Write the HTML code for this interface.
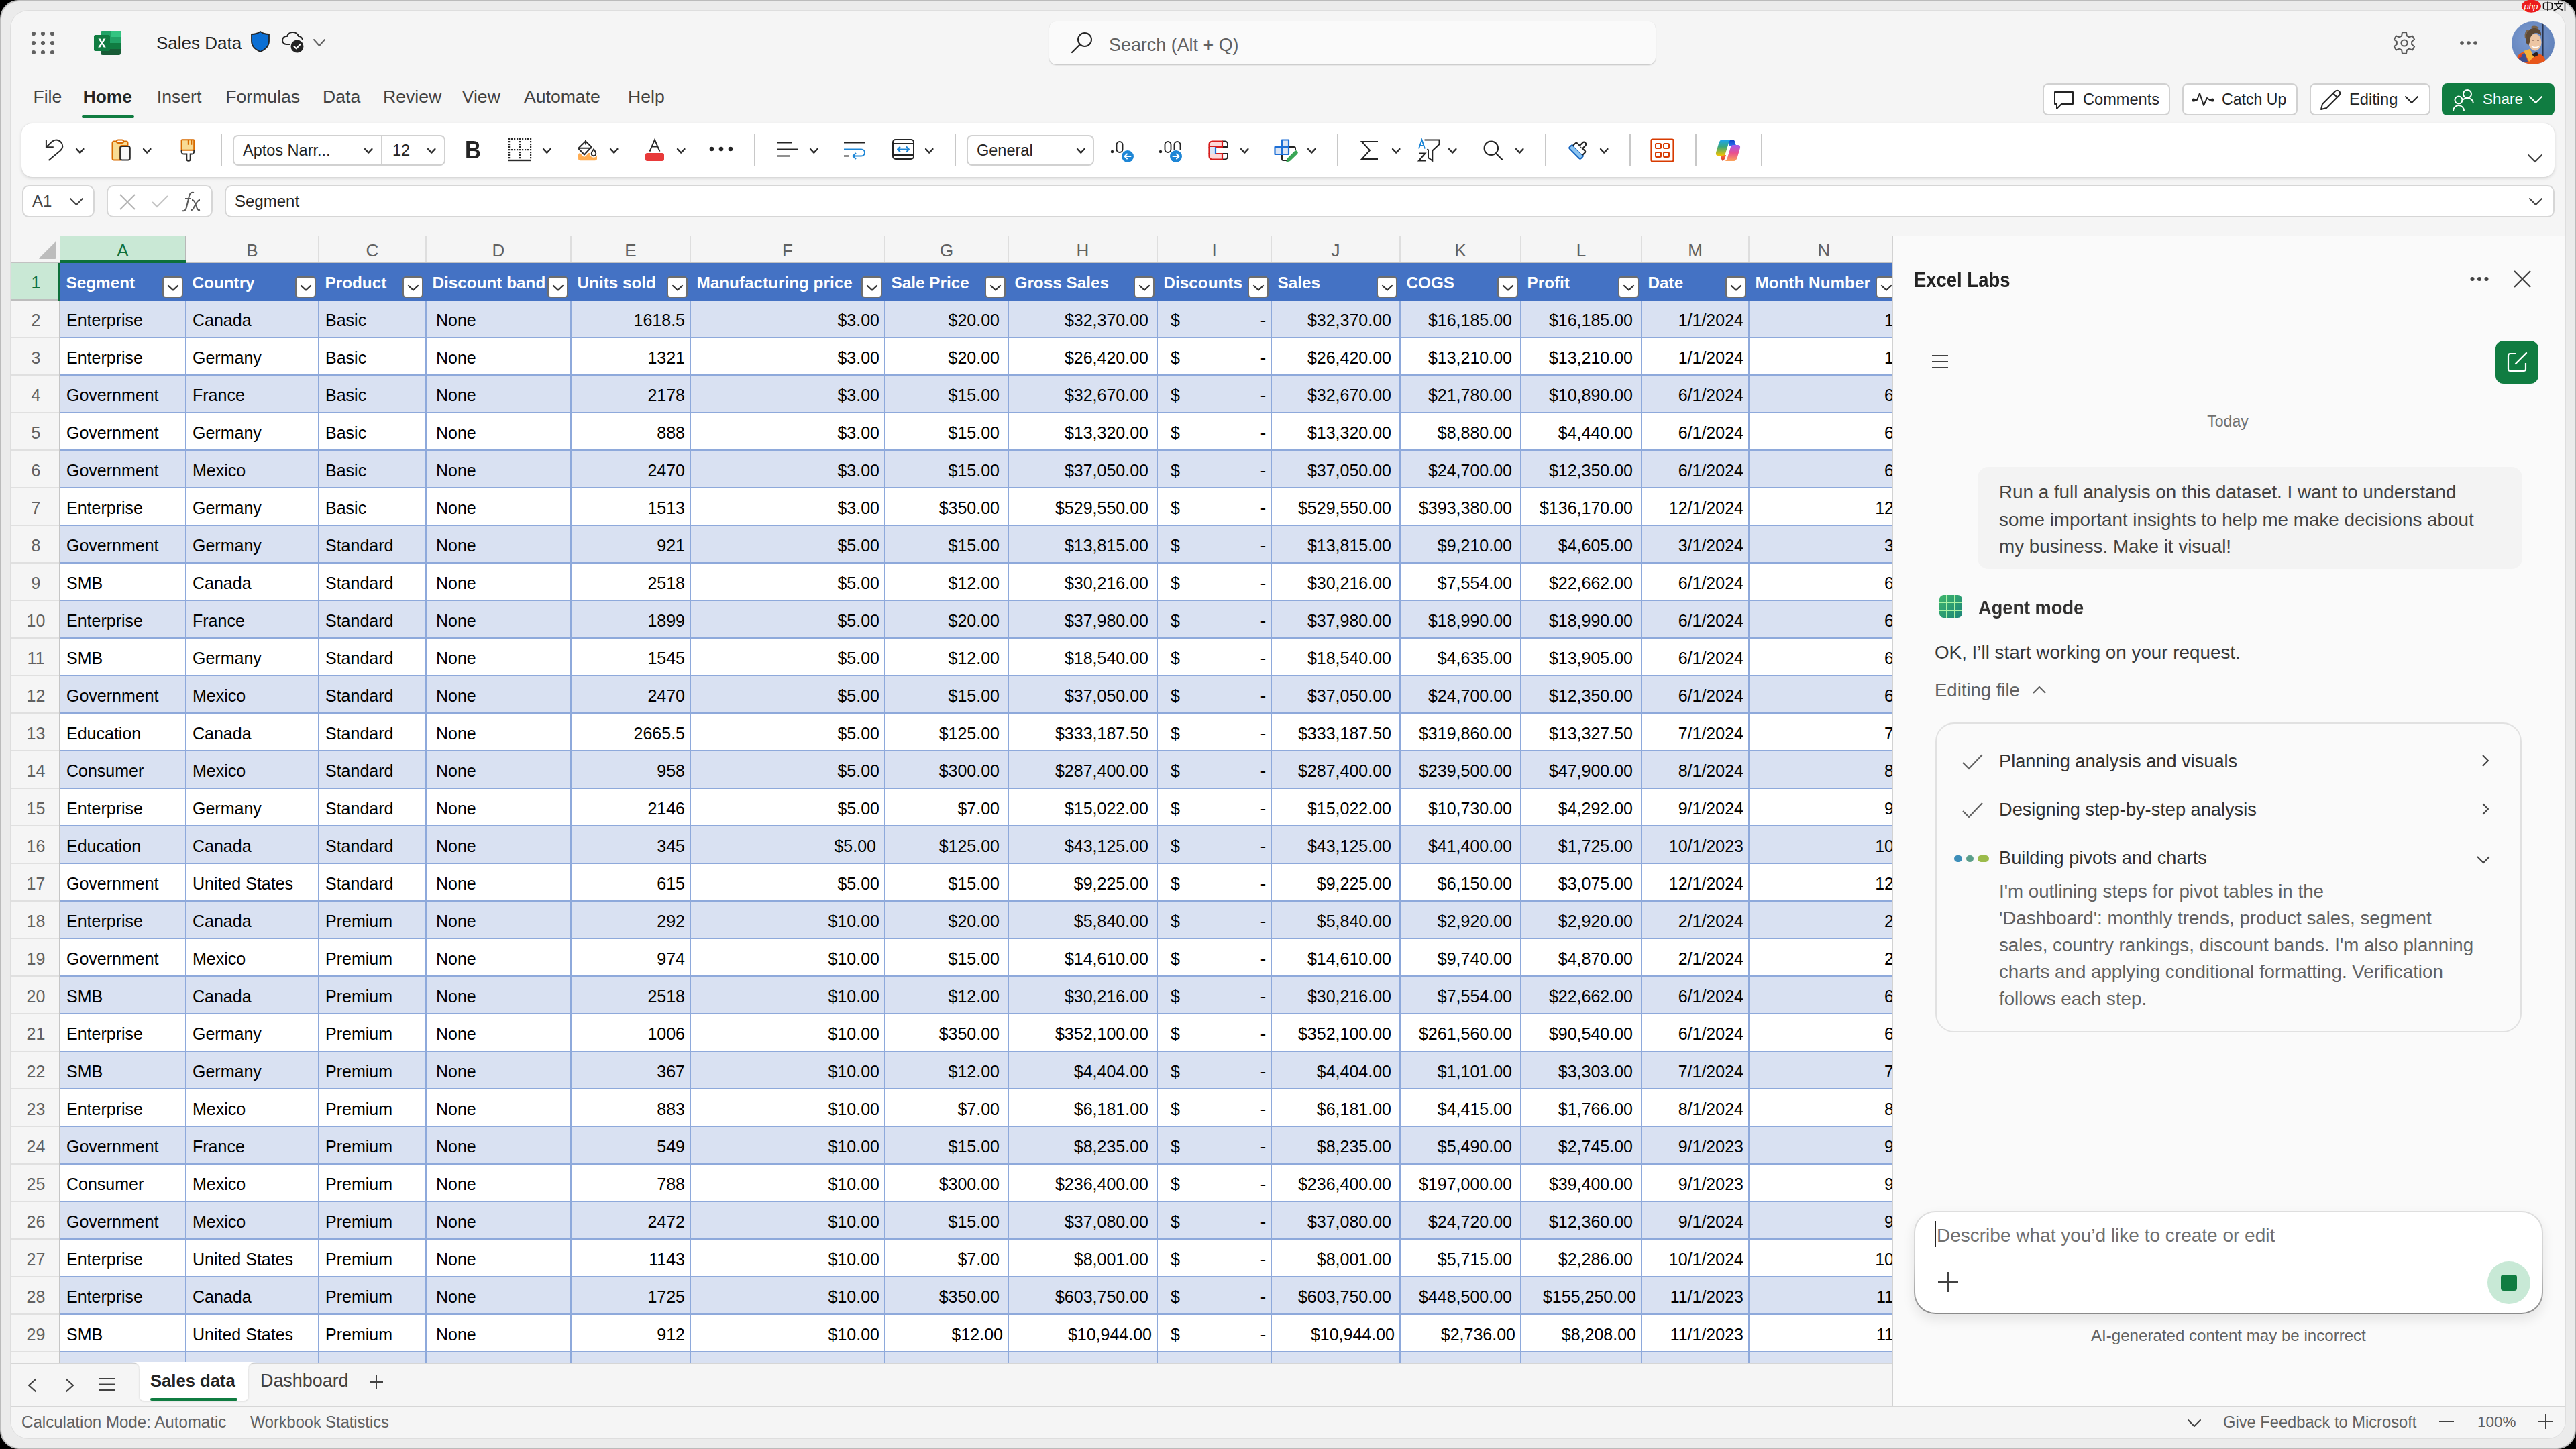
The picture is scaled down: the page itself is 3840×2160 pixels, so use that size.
<!DOCTYPE html><html><head><meta charset="utf-8"><style>
*{margin:0;padding:0;box-sizing:border-box}
html,body{width:3840px;height:2160px;overflow:hidden;background:#000}
body{font-family:"Liberation Sans",sans-serif;position:relative;color:#242424}
.a{position:absolute}
.t{position:absolute;white-space:nowrap}
svg{position:absolute;overflow:visible}
.frame{left:0;top:0;width:3840px;height:2160px;border-radius:28px;background:#ebebeb;border:2px solid #bbbbbb}
.win{left:16px;top:16px;width:3808px;height:2128px;border-radius:26px;background:#f5f5f5;overflow:hidden;box-shadow:0 0 0 1px #dedede}
.btn{position:absolute;border:2px solid #d1d1d1;border-radius:8px;background:#fff}
.sep{position:absolute;width:2px;background:#c8c8c8}
.chev{position:absolute}
.gl{position:absolute;width:2px;background:#8ea9db}
.cell{position:absolute;white-space:nowrap;font-size:25px;color:#000;line-height:56px;top:0}
.r{text-align:right}
.hdr{position:absolute;white-space:nowrap;font-size:24.3px;font-weight:bold;color:#fff;line-height:56px;top:0}
.fb{position:absolute;top:20px;width:31px;height:32px;border:2px solid #6e6e6e;border-radius:5px;background:#fff}
.ch{font-size:26px;color:#616161;line-height:36px;text-align:center}
.rh{font-size:25px;color:#616161;text-align:center;line-height:56px}
</style></head><body>
<div class="a frame"></div>
<div class="a win">
<svg style="left:0;top:0" width="120" height="120"><circle cx="34" cy="34" r="3.1" fill="#616161"/><circle cx="34" cy="48" r="3.1" fill="#616161"/><circle cx="34" cy="62" r="3.1" fill="#616161"/><circle cx="48" cy="34" r="3.1" fill="#616161"/><circle cx="48" cy="48" r="3.1" fill="#616161"/><circle cx="48" cy="62" r="3.1" fill="#616161"/><circle cx="62" cy="34" r="3.1" fill="#616161"/><circle cx="62" cy="48" r="3.1" fill="#616161"/><circle cx="62" cy="62" r="3.1" fill="#616161"/></svg>
<svg style="left:124px;top:30px" width="40" height="36" viewBox="0 0 40 36">
<path d="M12 0 H37 a3 3 0 0 1 3 3 V9 H10 V2 a2 2 0 0 1 2-2z" fill="#21a366"/>
<rect x="25" y="0" width="15" height="9" fill="#33c481"/>
<path d="M37 0 a3 3 0 0 1 3 3 V9 H25 V0z" fill="#33c481"/>
<rect x="10" y="9" width="30" height="9" fill="#21a366"/>
<rect x="10" y="18" width="30" height="9" fill="#107c41"/>
<path d="M10 27 H40 V33 a3 3 0 0 1-3 3 H13 a3 3 0 0 1-3-3z" fill="#185c37"/>
<rect x="0" y="6" width="24" height="24" rx="2.5" fill="#107c41"/>
<path d="M6.5 11.5 L10.4 18 L6.2 24.5 H9.4 L12 20.1 L14.6 24.5 H17.8 L13.6 18 L17.5 11.5 H14.4 L12 15.9 L9.6 11.5z" fill="#fff"/>
</svg>
<div class="t" style="left:217px;top:30px;font-size:26px;line-height:36px;color:#242424">Sales Data</div>
<svg style="left:358px;top:30px" width="28" height="32" viewBox="0 0 28 32">
<path d="M14 1 C18 4 22 5 27 5 V15 C27 23 21 28 14 31 C7 28 1 23 1 15 V5 C6 5 10 4 14 1z" fill="#0b6fd4" stroke="#242424" stroke-width="1.8" stroke-linejoin="round"/></svg>
<svg style="left:403px;top:29px" width="36" height="34" viewBox="0 0 36 34">
<path d="M13 21 H8 a6 6 0 0 1 0-12 h1 a9 9 0 0 1 17 0 a6 6 0 0 1 6 6" fill="none" stroke="#242424" stroke-width="2"/>
<circle cx="24" cy="24" r="9.5" fill="#242424"/>
<path d="M19.5 24.3 L22.7 27.3 L28.5 21" fill="none" stroke="#fff" stroke-width="2.2" stroke-linecap="round" stroke-linejoin="round"/></svg>
<svg class="chev" style="left:450.0px;top:41.0px" width="20" height="13"><path d="M2 2 L10.0 11 L18 2" fill="none" stroke="#616161" stroke-width="2" stroke-linecap="round" stroke-linejoin="round"/></svg>
<div class="a" style="left:1548px;top:16px;width:904px;height:64px;border-radius:10px;background:#fafafa;box-shadow:0 1px 2px rgba(0,0,0,0.22)"></div>
<svg style="left:1580px;top:31px" width="34" height="34" viewBox="0 0 34 34">
<circle cx="21" cy="12" r="10" fill="none" stroke="#242424" stroke-width="2"/>
<path d="M14 19 L2 31" stroke="#242424" stroke-width="2.2" stroke-linecap="round"/></svg>
<div class="t" style="left:1637px;top:33px;font-size:26.9px;line-height:36px;color:#616161">Search (Alt + Q)</div>
<svg style="left:3551px;top:31px" width="34" height="34" viewBox="0 0 34 34">
<path d="M13.14 6.38 L13.95 1.29 L20.05 1.29 L20.86 6.38 L24.26 8.34 L29.08 6.50 L32.13 11.79 L28.13 15.04 L28.13 18.96 L32.13 22.21 L29.08 27.50 L24.26 25.66 L20.86 27.62 L20.05 32.71 L13.95 32.71 L13.14 27.62 L9.74 25.66 L4.92 27.50 L1.87 22.21 L5.87 18.96 L5.87 15.04 L1.87 11.79 L4.92 6.50 L9.74 8.34z" fill="none" stroke="#595959" stroke-width="2" stroke-linejoin="round"/>
<circle cx="17" cy="17" r="4.6" fill="none" stroke="#595959" stroke-width="2"/></svg>
<svg style="left:3650px;top:44px" width="28" height="8"><circle cx="4" cy="4" r="2.8" fill="#595959"/><circle cx="14" cy="4" r="2.8" fill="#595959"/><circle cx="24" cy="4" r="2.8" fill="#595959"/></svg>
<svg style="left:3728px;top:16px" width="64" height="64" viewBox="0 0 64 64">
<defs><clipPath id="av"><circle cx="32" cy="32" r="32"/></clipPath>
<radialGradient id="avbg" cx="0.4" cy="0.4" r="0.7"><stop offset="0" stop-color="#7b9ad0"/><stop offset="1" stop-color="#5e7fb8"/></radialGradient></defs>
<g clip-path="url(#av)">
<rect width="64" height="64" fill="url(#avbg)"/>
<rect x="46" y="0" width="1.6" height="56" fill="#2a3550"/>
<path d="M4 64 L10 50 C14 46 18 45 22 45 L30 52 L40 48 C46 49 50 53 52 64z" fill="#e8561a"/>
<path d="M8 64 L12 52 L20 46 L24 60z" fill="#3f4f8f"/>
<path d="M9 56 L14 49 L16 52z" fill="#d83a2a"/>
<path d="M18 44 L27 41 L34 52 L26 60z" fill="#f6b13a"/>
<path d="M30 49 L38 45 L40 50 L34 53z" fill="#2b2020"/>
<ellipse cx="35" cy="31" rx="9.5" ry="12.5" fill="#edc6a4"/>
<path d="M22 32 C19 22 22 12 32 10 C40 9 45 14 44 21 C41 17 36 16 33 18 C29 20 27 25 27 31 L25 36z" fill="#5e4a36"/>
<path d="M21 24 C20 18 22 14 25 13 M30 9 C33 7 37 8 40 10" fill="none" stroke="#7a6248" stroke-width="2.5"/>
<path d="M30 37 Q35 41 41 37 Q35 39.5 30 37z" fill="#fff" stroke="#fff" stroke-width="1.2"/>
<path d="M30 28 h3 M38 28 h3" stroke="#6b4a3a" stroke-width="1.2"/>
</g></svg>
<div class="t" style="left:33.4px;top:110px;font-size:26.6px;line-height:36px;color:#424242;">File</div>
<div class="t" style="left:107.7px;top:110px;font-size:26.6px;line-height:36px;color:#242424;font-weight:bold;font-size:26.4px">Home</div>
<div class="t" style="left:217.8px;top:110px;font-size:26.6px;line-height:36px;color:#424242;">Insert</div>
<div class="t" style="left:320.3px;top:110px;font-size:26.6px;line-height:36px;color:#424242;">Formulas</div>
<div class="t" style="left:465px;top:110px;font-size:26.6px;line-height:36px;color:#424242;">Data</div>
<div class="t" style="left:555px;top:110px;font-size:26.6px;line-height:36px;color:#424242;">Review</div>
<div class="t" style="left:672.7px;top:110px;font-size:26.6px;line-height:36px;color:#424242;">View</div>
<div class="t" style="left:765px;top:110px;font-size:26.6px;line-height:36px;color:#424242;">Automate</div>
<div class="t" style="left:920px;top:110px;font-size:26.6px;line-height:36px;color:#424242;">Help</div>
<div class="a" style="left:106px;top:156px;width:78px;height:4px;border-radius:2px;background:#107c41"></div>
<div class="btn" style="left:3029px;top:108px;width:190px;height:48px"></div>
<div class="btn" style="left:3237px;top:108px;width:172px;height:48px"></div>
<div class="btn" style="left:3427px;top:108px;width:180px;height:48px"></div>
<div class="a" style="left:3624px;top:108px;width:168px;height:48px;border-radius:8px;background:#107c41"></div>
<svg style="left:3045px;top:119px" width="32" height="30" viewBox="0 0 32 30">
<path d="M2 2 H29 V20 H12 L5 27 V20 H2z" fill="none" stroke="#242424" stroke-width="2" stroke-linejoin="round"/></svg>
<div class="t" style="left:3089px;top:114px;font-size:23.6px;line-height:36px">Comments</div>
<svg style="left:3251px;top:120px" width="34" height="24" viewBox="0 0 34 24">
<circle cx="3" cy="13" r="2.6" fill="#242424"/><circle cx="31" cy="13" r="2.6" fill="#242424"/>
<path d="M3 13 H8 L12 3 L18 21 L23 10 L27 13 H31" fill="none" stroke="#242424" stroke-width="2" stroke-linejoin="round"/></svg>
<div class="t" style="left:3296px;top:114px;font-size:23.1px;line-height:36px">Catch Up</div>
<svg style="left:3441px;top:115px" width="34" height="34" viewBox="0 0 34 34">
<path d="M5 24 L24 5 a4 4 0 0 1 6 6 L11 30 L3 32z M21 8 L27 14" fill="none" stroke="#242424" stroke-width="2" stroke-linejoin="round"/></svg>
<div class="t" style="left:3486px;top:114px;font-size:23.7px;line-height:36px">Editing</div>
<svg class="chev" style="left:3567.5px;top:125.5px" width="22" height="13"><path d="M2 2 L11.0 11 L20 2" fill="none" stroke="#242424" stroke-width="2" stroke-linecap="round" stroke-linejoin="round"/></svg>
<svg style="left:3640px;top:116px" width="34" height="34" viewBox="0 0 34 34">
<circle cx="22" cy="8" r="6" fill="none" stroke="#fff" stroke-width="2"/>
<path d="M13 22 a9 8 0 0 1 18 0" fill="none" stroke="#fff" stroke-width="2"/>
<circle cx="9" cy="17" r="5.5" fill="none" stroke="#fff" stroke-width="2"/>
<path d="M1 33 a8 8 0 0 1 16 0" fill="none" stroke="#fff" stroke-width="2"/></svg>
<div class="t" style="left:3685px;top:114px;font-size:22.5px;line-height:36px;color:#fff">Share</div>
<svg class="chev" style="left:3753.0px;top:125.5px" width="22" height="13"><path d="M2 2 L11.0 11 L20 2" fill="none" stroke="#fff" stroke-width="2" stroke-linecap="round" stroke-linejoin="round"/></svg>
<div class="a" style="left:16px;top:168px;width:3776px;height:80px;border-radius:16px;background:#fff;box-shadow:0 2px 5px rgba(0,0,0,0.13),0 0 2px rgba(0,0,0,0.1)"></div>
<div class="sep" style="left:313px;top:184px;height:48px"></div>
<div class="sep" style="left:1108px;top:184px;height:48px"></div>
<div class="sep" style="left:1407px;top:184px;height:48px"></div>
<div class="sep" style="left:1977px;top:184px;height:48px"></div>
<div class="sep" style="left:2287px;top:184px;height:48px"></div>
<div class="sep" style="left:2413px;top:184px;height:48px"></div>
<div class="sep" style="left:2511px;top:184px;height:48px"></div>
<div class="sep" style="left:2609px;top:184px;height:48px"></div>
<svg style="left:50px;top:191px" width="32" height="34" viewBox="0 0 32 34">
<path d="M2.9 1 V12.2 H13.8" fill="none" stroke="#2b2b2b" stroke-width="2"/>
<path d="M3.5 11.5 L11.5 4 C13.5 2.2 15.8 1.5 17.8 1.5 C23 1.5 27.3 6 27.3 11 C27.3 13.5 26 15.6 23.6 17.7 L6.5 31.9" fill="none" stroke="#2b2b2b" stroke-width="2"/></svg>
<svg class="chev" style="left:95.75px;top:204.2px" width="14.5" height="9.6"><path d="M2 2 L7.25 7.6 L12.5 2" fill="none" stroke="#2b2b2b" stroke-width="2.3" stroke-linecap="round" stroke-linejoin="round"/></svg>
<svg style="left:149px;top:191px" width="32" height="34" viewBox="0 0 32 34">
<path d="M5 3.5 H23 a2.5 2.5 0 0 1 2.5 2.5 V10 H17 a3 3 0 0 0-3 3 V31.5 H5 a2.5 2.5 0 0 1-2.5-2.5 V6 A2.5 2.5 0 0 1 5 3.5z" fill="#f8db94" stroke="#d86b00" stroke-width="2"/>
<rect x="9" y="1.5" width="10" height="4.5" rx="2.2" fill="#fff" stroke="#d86b00" stroke-width="2"/>
<rect x="14.3" y="11" width="14.5" height="20.5" rx="2.8" fill="#f8f8f8" stroke="#2b2b2b" stroke-width="2"/></svg>
<svg class="chev" style="left:196.25px;top:204.2px" width="14.5" height="9.6"><path d="M2 2 L7.25 7.6 L12.5 2" fill="none" stroke="#2b2b2b" stroke-width="2.3" stroke-linecap="round" stroke-linejoin="round"/></svg>
<svg style="left:253px;top:191px" width="22" height="34" viewBox="0 0 22 34">
<rect x="1.6" y="1.3" width="18.6" height="15.4" rx="1" fill="#f8db94" stroke="#d86b00" stroke-width="2"/>
<path d="M11.8 1.5 V8.8 M16.3 1.5 V8.8" stroke="#d86b00" stroke-width="2"/>
<path d="M1.6 17 V19 a3.6 3.6 0 0 0 3.6 3.6 H9.3 V30 a2.7 2.7 0 0 0 5.4 0 V22.6 H16.6 a3.6 3.6 0 0 0 3.6-3.6 V17" fill="none" stroke="#2b2b2b" stroke-width="2"/></svg>
<div class="a" style="left:331px;top:185px;width:317px;height:46px;border:2px solid #d1d1d1;border-radius:8px;background:#fff"></div>
<div class="a" style="left:552px;top:186px;width:2px;height:44px;background:#d1d1d1"></div>
<div class="t" style="left:346px;top:190px;font-size:23.5px;line-height:36px;color:#242424">Aptos Narr...</div>
<svg class="chev" style="left:526.25px;top:204.2px" width="14.5" height="9.6"><path d="M2 2 L7.25 7.6 L12.5 2" fill="none" stroke="#2b2b2b" stroke-width="2.3" stroke-linecap="round" stroke-linejoin="round"/></svg>
<div class="t" style="left:569px;top:190px;font-size:23.5px;line-height:36px;color:#242424">12</div>
<svg class="chev" style="left:619.75px;top:204.2px" width="14.5" height="9.6"><path d="M2 2 L7.25 7.6 L12.5 2" fill="none" stroke="#2b2b2b" stroke-width="2.3" stroke-linecap="round" stroke-linejoin="round"/></svg>
<div class="t" style="left:677px;top:189px;font-size:36px;line-height:38px;font-weight:bold;color:#242424;transform:scaleX(0.92);transform-origin:left">B</div>
<svg style="left:741px;top:189px" width="38" height="38" viewBox="0 0 38 38"><rect x="1" y="1" width="2.2" height="2.2" fill="#2b2b2b"/><rect x="1" y="17" width="2.2" height="2.2" fill="#2b2b2b"/><rect x="5" y="1" width="2.2" height="2.2" fill="#2b2b2b"/><rect x="5" y="17" width="2.2" height="2.2" fill="#2b2b2b"/><rect x="9" y="1" width="2.2" height="2.2" fill="#2b2b2b"/><rect x="9" y="17" width="2.2" height="2.2" fill="#2b2b2b"/><rect x="13" y="1" width="2.2" height="2.2" fill="#2b2b2b"/><rect x="13" y="17" width="2.2" height="2.2" fill="#2b2b2b"/><rect x="17" y="1" width="2.2" height="2.2" fill="#2b2b2b"/><rect x="17" y="17" width="2.2" height="2.2" fill="#2b2b2b"/><rect x="21" y="1" width="2.2" height="2.2" fill="#2b2b2b"/><rect x="21" y="17" width="2.2" height="2.2" fill="#2b2b2b"/><rect x="25" y="1" width="2.2" height="2.2" fill="#2b2b2b"/><rect x="25" y="17" width="2.2" height="2.2" fill="#2b2b2b"/><rect x="29" y="1" width="2.2" height="2.2" fill="#2b2b2b"/><rect x="29" y="17" width="2.2" height="2.2" fill="#2b2b2b"/><rect x="33" y="1" width="2.2" height="2.2" fill="#2b2b2b"/><rect x="33" y="17" width="2.2" height="2.2" fill="#2b2b2b"/><rect x="1" y="5" width="2.2" height="2.2" fill="#2b2b2b"/><rect x="17" y="5" width="2.2" height="2.2" fill="#2b2b2b"/><rect x="33" y="5" width="2.2" height="2.2" fill="#2b2b2b"/><rect x="1" y="9" width="2.2" height="2.2" fill="#2b2b2b"/><rect x="17" y="9" width="2.2" height="2.2" fill="#2b2b2b"/><rect x="33" y="9" width="2.2" height="2.2" fill="#2b2b2b"/><rect x="1" y="13" width="2.2" height="2.2" fill="#2b2b2b"/><rect x="17" y="13" width="2.2" height="2.2" fill="#2b2b2b"/><rect x="33" y="13" width="2.2" height="2.2" fill="#2b2b2b"/><rect x="1" y="21" width="2.2" height="2.2" fill="#2b2b2b"/><rect x="17" y="21" width="2.2" height="2.2" fill="#2b2b2b"/><rect x="33" y="21" width="2.2" height="2.2" fill="#2b2b2b"/><rect x="1" y="25" width="2.2" height="2.2" fill="#2b2b2b"/><rect x="17" y="25" width="2.2" height="2.2" fill="#2b2b2b"/><rect x="33" y="25" width="2.2" height="2.2" fill="#2b2b2b"/><rect x="1" y="29" width="2.2" height="2.2" fill="#2b2b2b"/><rect x="17" y="29" width="2.2" height="2.2" fill="#2b2b2b"/><rect x="33" y="29" width="2.2" height="2.2" fill="#2b2b2b"/>
<rect x="1" y="32.8" width="34" height="2.4" fill="#2b2b2b"/></svg>
<svg class="chev" style="left:791.75px;top:204.2px" width="14.5" height="9.6"><path d="M2 2 L7.25 7.6 L12.5 2" fill="none" stroke="#2b2b2b" stroke-width="2.3" stroke-linecap="round" stroke-linejoin="round"/></svg>
<svg style="left:844px;top:190px" width="32" height="36" viewBox="0 0 32 36">
<rect x="2" y="22" width="28" height="11.3" rx="3.3" fill="#ffad52"/>
<path d="M2 15 L13 4.5 L21.7 13 L11 24.5z" fill="#fff" stroke="#fff" stroke-width="6" stroke-linejoin="round"/>
<path d="M25 16.4 C23 19 21.7 21 21.7 23 a3.3 3.3 0 0 0 6.6 0 C28.3 21 27 19 25 16.4z" fill="#fff" stroke="#fff" stroke-width="5"/>
<path d="M2 15 L13 4.5 L21.7 13 L11 24.5z M2.5 14.7 H21.5" fill="none" stroke="#2b2b2b" stroke-width="2" stroke-linejoin="round"/>
<path d="M13 2 V9.5" stroke="#2b2b2b" stroke-width="2"/>
<path d="M25 16.4 C23 19 21.7 21 21.7 23 a3.3 3.3 0 0 0 6.6 0 C28.3 21 27 19 25 16.4z" fill="none" stroke="#2b2b2b" stroke-width="1.9"/></svg>
<svg class="chev" style="left:892.25px;top:204.2px" width="14.5" height="9.6"><path d="M2 2 L7.25 7.6 L12.5 2" fill="none" stroke="#2b2b2b" stroke-width="2.3" stroke-linecap="round" stroke-linejoin="round"/></svg>
<svg style="left:945px;top:190px" width="30" height="36" viewBox="0 0 30 36">
<path d="M7.5 19.6 L15 2.2 L22.5 19.6 M10.5 12.6 H19.5" fill="none" stroke="#2b2b2b" stroke-width="2"/>
<rect x="1" y="22" width="28" height="12" rx="3" fill="#e83a3a"/></svg>
<svg class="chev" style="left:992.25px;top:204.2px" width="14.5" height="9.6"><path d="M2 2 L7.25 7.6 L12.5 2" fill="none" stroke="#2b2b2b" stroke-width="2.3" stroke-linecap="round" stroke-linejoin="round"/></svg>
<svg style="left:1041px;top:202px" width="36" height="8"><circle cx="4" cy="4" r="3.3" fill="#242424"/><circle cx="18" cy="4" r="3.3" fill="#242424"/><circle cx="32" cy="4" r="3.3" fill="#242424"/></svg>
<svg style="left:1142px;top:192px" width="34" height="28" viewBox="0 0 34 28">
<path d="M0 4.5 H23 M0 14.5 H32 M0 24.5 H20" stroke="#242424" stroke-width="2"/></svg>
<svg class="chev" style="left:1189.75px;top:204.2px" width="14.5" height="9.6"><path d="M2 2 L7.25 7.6 L12.5 2" fill="none" stroke="#2b2b2b" stroke-width="2.3" stroke-linecap="round" stroke-linejoin="round"/></svg>
<svg style="left:1242px;top:192px" width="34" height="32" viewBox="0 0 34 32">
<path d="M0 4.5 H32" stroke="#242424" stroke-width="2"/>
<path d="M0 24.5 H8" stroke="#242424" stroke-width="2"/>
<path d="M0 14.5 H26 a5 5 0 0 1 0 10 H14 M18 20 L13.5 24.5 L18 29" fill="none" stroke="#1d86d6" stroke-width="2" stroke-linejoin="round"/></svg>
<svg style="left:1314px;top:191px" width="34" height="32" viewBox="0 0 34 32">
<rect x="1" y="1" width="31" height="29" rx="4" fill="none" stroke="#242424" stroke-width="2"/>
<path d="M1 7 H32 M1 24 H32" stroke="#242424" stroke-width="2"/>
<path d="M8 15.5 H25 M12 11.5 L8 15.5 L12 19.5 M21 11.5 L25 15.5 L21 19.5" fill="none" stroke="#1d86d6" stroke-width="2" stroke-linejoin="round"/></svg>
<svg class="chev" style="left:1362.25px;top:204.2px" width="14.5" height="9.6"><path d="M2 2 L7.25 7.6 L12.5 2" fill="none" stroke="#2b2b2b" stroke-width="2.3" stroke-linecap="round" stroke-linejoin="round"/></svg>
<div class="a" style="left:1425px;top:185px;width:190px;height:46px;border:2px solid #d1d1d1;border-radius:8px;background:#fff"></div>
<div class="t" style="left:1440px;top:190px;font-size:23.5px;line-height:36px;color:#242424">General</div>
<svg class="chev" style="left:1587.75px;top:204.2px" width="14.5" height="9.6"><path d="M2 2 L7.25 7.6 L12.5 2" fill="none" stroke="#2b2b2b" stroke-width="2.3" stroke-linecap="round" stroke-linejoin="round"/></svg>
<svg style="left:1638px;top:192px" width="40" height="36" viewBox="0 0 40 36">
<circle cx="4" cy="18" r="2.2" fill="#242424"/>
<rect x="10.5" y="3" width="9" height="16" rx="4.5" fill="none" stroke="#242424" stroke-width="1.9"/>
<circle cx="27" cy="25" r="9" fill="#1d86d6"/>
<path d="M31.5 25 H22.5 M26 21.5 L22.5 25 L26 28.5" fill="none" stroke="#fff" stroke-width="2" stroke-linecap="round" stroke-linejoin="round"/></svg>
<svg style="left:1710px;top:192px" width="40" height="36" viewBox="0 0 40 36">
<circle cx="4" cy="18" r="2.2" fill="#242424"/>
<rect x="10.5" y="3" width="9" height="16" rx="4.5" fill="none" stroke="#242424" stroke-width="1.9"/>
<path d="M24.5 15 V7.5 a4.5 4.5 0 0 1 9 0 V15" fill="none" stroke="#242424" stroke-width="1.9"/>
<circle cx="27" cy="25" r="9" fill="#1d86d6"/>
<path d="M22.5 25 H31.5 M28 21.5 L31.5 25 L28 28.5" fill="none" stroke="#fff" stroke-width="2" stroke-linecap="round" stroke-linejoin="round"/></svg>
<svg style="left:1785px;top:193px" width="32" height="30" viewBox="0 0 32 30">
<path d="M21 1.5 H25 a4 4 0 0 1 4 4 V10 H21" fill="none" stroke="#242424" stroke-width="2"/>
<path d="M21 28.5 H25 a4 4 0 0 0 4-4 V20 H21" fill="none" stroke="#242424" stroke-width="2"/>
<path d="M21 1.5 H6 a4.5 4.5 0 0 0-4.5 4.5 V10 H21z" fill="#fdd8d8" stroke="#d61b1b" stroke-width="2.2" stroke-linejoin="round"/>
<path d="M21 28.5 H6 a4.5 4.5 0 0 1-4.5-4.5 V20 H21z" fill="#fdd8d8" stroke="#d61b1b" stroke-width="2.2" stroke-linejoin="round"/>
<rect x="1.5" y="10" width="9.5" height="10" fill="#dbe5f5"/>
<path d="M1.5 10 V20" stroke="#d61b1b" stroke-width="2.2"/>
<path d="M11 10 V20" stroke="#1d6fd6" stroke-width="2.2"/></svg>
<svg class="chev" style="left:1832.25px;top:204.2px" width="14.5" height="9.6"><path d="M2 2 L7.25 7.6 L12.5 2" fill="none" stroke="#2b2b2b" stroke-width="2.3" stroke-linecap="round" stroke-linejoin="round"/></svg>
<svg style="left:1883px;top:191px" width="36" height="36" viewBox="0 0 36 36">
<path d="M22 12 H30 a2 2 0 0 1 2 2 V17" fill="none" stroke="#242424" stroke-width="2"/>
<path d="M12 23 V30 a2 2 0 0 0 2 2 H19" fill="none" stroke="#242424" stroke-width="2"/>
<path d="M12 1.5 H22 V23 H1.5 V12 H12z" fill="#dbe5f5" stroke="#1d6fd6" stroke-width="2.2" stroke-linejoin="round"/>
<path d="M12 12 H22 M12 12 V23" stroke="#1d6fd6" stroke-width="2.2"/>
<path d="M18 35 L20 29 L31 18 a3 3 0 0 1 4.2 4.2 L24 33z" fill="#3aa655"/></svg>
<svg class="chev" style="left:1932.25px;top:204.2px" width="14.5" height="9.6"><path d="M2 2 L7.25 7.6 L12.5 2" fill="none" stroke="#2b2b2b" stroke-width="2.3" stroke-linecap="round" stroke-linejoin="round"/></svg>
<svg style="left:2012px;top:193px" width="28" height="30" viewBox="0 0 28 30">
<path d="M26 2 H2 L14 15 L2 28 H26" fill="none" stroke="#242424" stroke-width="2" stroke-linejoin="miter"/></svg>
<svg class="chev" style="left:2057.75px;top:204.2px" width="14.5" height="9.6"><path d="M2 2 L7.25 7.6 L12.5 2" fill="none" stroke="#2b2b2b" stroke-width="2.3" stroke-linecap="round" stroke-linejoin="round"/></svg>
<svg style="left:2096px;top:190px" width="36" height="36" viewBox="0 0 36 36">
<path d="M3 15.5 L7.5 2.5 L12 15.5 M4.6 11 H10.4" fill="none" stroke="#1d86d6" stroke-width="1.9"/>
<path d="M3 22.5 H12.5 L3 33.5 H13" fill="none" stroke="#242424" stroke-width="2" stroke-linejoin="miter"/>
<path d="M11.5 2.5 H33.5 V9 L23.3 18.5 V33.5 L17 29 V17.5 L15.5 16" fill="none" stroke="#242424" stroke-width="2" stroke-linejoin="miter"/></svg>
<svg class="chev" style="left:2142.25px;top:204.2px" width="14.5" height="9.6"><path d="M2 2 L7.25 7.6 L12.5 2" fill="none" stroke="#2b2b2b" stroke-width="2.3" stroke-linecap="round" stroke-linejoin="round"/></svg>
<svg style="left:2194px;top:192px" width="32" height="32" viewBox="0 0 32 32">
<circle cx="12.8" cy="12.8" r="10.3" fill="none" stroke="#242424" stroke-width="2"/>
<path d="M20 20.5 L29 29.5" stroke="#242424" stroke-width="2.2" stroke-linecap="round"/></svg>
<svg class="chev" style="left:2242.25px;top:204.2px" width="14.5" height="9.6"><path d="M2 2 L7.25 7.6 L12.5 2" fill="none" stroke="#2b2b2b" stroke-width="2.3" stroke-linecap="round" stroke-linejoin="round"/></svg>
<svg style="left:2319px;top:191px" width="34" height="34" viewBox="0 0 34 34">
<g transform="rotate(45 17 17)">
<rect x="5" y="17" width="24" height="7" rx="2" fill="#8cc4f0" stroke="#1565c0" stroke-width="2"/>
<path d="M7 17 V12 a2 2 0 0 1 2-2 H25 a2 2 0 0 1 2 2 V17" fill="#fff" stroke="#242424" stroke-width="2"/>
<path d="M14 10 V4 a3 3 0 0 1 6 0 V10" fill="#fff" stroke="#242424" stroke-width="2"/>
</g></svg>
<svg class="chev" style="left:2368.25px;top:204.2px" width="14.5" height="9.6"><path d="M2 2 L7.25 7.6 L12.5 2" fill="none" stroke="#2b2b2b" stroke-width="2.3" stroke-linecap="round" stroke-linejoin="round"/></svg>
<svg style="left:2444px;top:190px" width="36" height="36" viewBox="0 0 36 36">
<rect x="1.5" y="1.5" width="33" height="33" rx="2" fill="none" stroke="#d83b01" stroke-width="2.2"/>
<rect x="8" y="8" width="8" height="7" rx="1.5" fill="none" stroke="#d83b01" stroke-width="2"/>
<rect x="20" y="8" width="8" height="7" rx="1.5" fill="none" stroke="#d83b01" stroke-width="2"/>
<rect x="8" y="21" width="8" height="7" rx="1.5" fill="none" stroke="#d83b01" stroke-width="2"/>
<rect x="20" y="21" width="8" height="7" rx="1.5" fill="none" stroke="#d83b01" stroke-width="2"/></svg>
<svg style="left:2541px;top:191px" width="38" height="34" viewBox="0 0 38 34">
<defs>
<linearGradient id="cpa" x1="0" y1="0" x2="0" y2="1"><stop offset="0" stop-color="#1aa4f5"/><stop offset="0.45" stop-color="#3aa87a"/><stop offset="1" stop-color="#f3c300"/></linearGradient>
<linearGradient id="cpb" x1="0" y1="0" x2="0" y2="1"><stop offset="0" stop-color="#a25bf0"/><stop offset="0.5" stop-color="#ea4f8e"/><stop offset="1" stop-color="#fba35a"/></linearGradient>
<linearGradient id="cpc" x1="0" y1="0" x2="0" y2="1"><stop offset="0" stop-color="#0b3fc8"/><stop offset="1" stop-color="#2a6ee8"/></linearGradient>
<linearGradient id="cpd" x1="0" y1="0" x2="0" y2="1"><stop offset="0" stop-color="#ff6a3a"/><stop offset="1" stop-color="#d63a2a"/></linearGradient>
</defs>
<path d="M20 1 H25.5 C28 1 29 3 29.5 5 L31 10 H21z" fill="url(#cpc)"/>
<path d="M8 24 H16 L15 27 C14 30 13 32 11 33 C9.5 32 8.5 29 8 24z" fill="url(#cpd)"/>
<path d="M10 1 H25 C22 1 21 3 20 6 L15 22 C14.5 24 13 25 11 25 H4 C1.5 25 0.5 23 1 20.5 L5 7 C6 3 8 1 10 1z" fill="url(#cpa)"/>
<path d="M28 33 H13 C16 33 17 31 18 28 L23 12 C23.5 10 25 9 27 9 H34 C36.5 9 37.5 11 37 13.5 L33 27 C32 31 30 33 28 33z" fill="url(#cpb)"/></svg>
<svg class="chev" style="left:3751.0px;top:213.0px" width="24" height="14"><path d="M2 2 L12.0 12 L22 2" fill="none" stroke="#424242" stroke-width="2.2" stroke-linecap="round" stroke-linejoin="round"/></svg>
<div class="a" style="left:17px;top:260px;width:108px;height:48px;border:2px solid #d6d6d6;border-radius:10px;background:#fff"></div>
<div class="t" style="left:32px;top:266px;font-size:24px;line-height:36px;color:#424242">A1</div>
<svg class="chev" style="left:86.5px;top:277.5px" width="22" height="13"><path d="M2 2 L11.0 11 L20 2" fill="none" stroke="#424242" stroke-width="2" stroke-linecap="round" stroke-linejoin="round"/></svg>
<div class="a" style="left:143px;top:260px;width:158px;height:48px;border:2px solid #d6d6d6;border-radius:10px;background:#fff"></div>
<svg style="left:162px;top:273px" width="24" height="24"><path d="M1 1 L23 23 M23 1 L1 23" stroke="#b4b4b4" stroke-width="2"/></svg>
<svg style="left:210px;top:274px" width="25" height="20"><path d="M1 11 L8 18 L24 2" fill="none" stroke="#c4c4c4" stroke-width="2"/></svg>
<svg style="left:254px;top:269px" width="32" height="32" viewBox="0 0 32 32"><path d="M2 29 C5 30 7 28 8 24 L12 7 C13 3 15 1 19 2" fill="none" stroke="#5a5a5a" stroke-width="2"/><path d="M6 11 H15" stroke="#5a5a5a" stroke-width="2"/><path d="M16 13 C19 13 20 15 21 18 L24 26 C25 28 26 28.5 28 28 M28 13 C26 13 25 14 23 17 L19 24 C18 27 16.5 28.5 14.5 28" fill="none" stroke="#5a5a5a" stroke-width="2"/></svg>
<div class="a" style="left:319px;top:260px;width:3473px;height:48px;border:2px solid #d6d6d6;border-radius:10px;background:#fff"></div>
<div class="t" style="left:334px;top:266px;font-size:24px;line-height:36px;color:#242424">Segment</div>
<svg class="chev" style="left:3753.0px;top:277.5px" width="22" height="13"><path d="M2 2 L11.0 11 L20 2" fill="none" stroke="#424242" stroke-width="2" stroke-linecap="round" stroke-linejoin="round"/></svg>
<div class="a" style="left:74px;top:336px;width:188px;height:36px;background:#c9e8d5"></div>
<div class="t ch" style="left:74px;top:338.5px;width:186px;color:#0e703b">A</div>
<div class="a" style="left:260px;top:336px;width:2px;height:38px;background:#b8b8b8"></div>
<div class="t ch" style="left:262px;top:338.5px;width:196px;color:#616161">B</div>
<div class="a" style="left:458px;top:336px;width:2px;height:38px;background:#dedede"></div>
<div class="t ch" style="left:460px;top:338.5px;width:158px;color:#616161">C</div>
<div class="a" style="left:618px;top:336px;width:2px;height:38px;background:#dedede"></div>
<div class="t ch" style="left:620px;top:338.5px;width:214px;color:#616161">D</div>
<div class="a" style="left:834px;top:336px;width:2px;height:38px;background:#dedede"></div>
<div class="t ch" style="left:836px;top:338.5px;width:176px;color:#616161">E</div>
<div class="a" style="left:1012px;top:336px;width:2px;height:38px;background:#dedede"></div>
<div class="t ch" style="left:1014px;top:338.5px;width:288px;color:#616161">F</div>
<div class="a" style="left:1302px;top:336px;width:2px;height:38px;background:#dedede"></div>
<div class="t ch" style="left:1304px;top:338.5px;width:182px;color:#616161">G</div>
<div class="a" style="left:1486px;top:336px;width:2px;height:38px;background:#dedede"></div>
<div class="t ch" style="left:1488px;top:338.5px;width:220px;color:#616161">H</div>
<div class="a" style="left:1708px;top:336px;width:2px;height:38px;background:#dedede"></div>
<div class="t ch" style="left:1710px;top:338.5px;width:168px;color:#616161">I</div>
<div class="a" style="left:1878px;top:336px;width:2px;height:38px;background:#dedede"></div>
<div class="t ch" style="left:1880px;top:338.5px;width:190px;color:#616161">J</div>
<div class="a" style="left:2070px;top:336px;width:2px;height:38px;background:#dedede"></div>
<div class="t ch" style="left:2072px;top:338.5px;width:178px;color:#616161">K</div>
<div class="a" style="left:2250px;top:336px;width:2px;height:38px;background:#dedede"></div>
<div class="t ch" style="left:2252px;top:338.5px;width:178px;color:#616161">L</div>
<div class="a" style="left:2430px;top:336px;width:2px;height:38px;background:#dedede"></div>
<div class="t ch" style="left:2432px;top:338.5px;width:158px;color:#616161">M</div>
<div class="a" style="left:2590px;top:336px;width:2px;height:38px;background:#dedede"></div>
<div class="t ch" style="left:2592px;top:338.5px;width:222px;color:#616161">N</div>
<div class="a" style="left:0px;top:374px;width:2804px;height:2px;background:#c2c2c2"></div>
<div class="a" style="left:74px;top:372px;width:188px;height:4px;background:#0e703b"></div>
<svg style="left:40px;top:342px" width="30" height="30" viewBox="0 0 30 30"><path d="M26 3 Q28 1 28 4 V26 a2 2 0 0 1-2 2 H4 Q1 28 3 26z" fill="#bdbdbd"/></svg>
<div class="a" style="left:0px;top:376px;width:2804px;height:1640px;overflow:hidden">
<div class="a" style="left:74px;top:0px;width:2740px;height:56px;background:#4472c4"></div>
<div class="a" style="left:0;top:0px;width:70px;height:54px;background:#c9e8d5"></div>
<div class="a" style="left:0;top:54px;width:72px;height:2px;background:#bdbdbd"></div>
<div class="t rh" style="left:0;top:1px;width:75px;color:#0e703b">1</div>
<div class="a" style="left:70px;top:0px;width:4px;height:56px;background:#0e703b"></div>
<div class="hdr" style="left:82.5px;top:2px">Segment</div>
<div class="fb" style="left:226px;top:20px"><svg style="left:5px;top:10px" width="18" height="10"><path d="M2 2 L9 8.5 L16 2" fill="none" stroke="#333" stroke-width="2.3" stroke-linecap="round" stroke-linejoin="round"/></svg></div>
<div class="hdr" style="left:270.5px;top:2px">Country</div>
<div class="fb" style="left:424px;top:20px"><svg style="left:5px;top:10px" width="18" height="10"><path d="M2 2 L9 8.5 L16 2" fill="none" stroke="#333" stroke-width="2.3" stroke-linecap="round" stroke-linejoin="round"/></svg></div>
<div class="hdr" style="left:468.5px;top:2px">Product</div>
<div class="fb" style="left:584px;top:20px"><svg style="left:5px;top:10px" width="18" height="10"><path d="M2 2 L9 8.5 L16 2" fill="none" stroke="#333" stroke-width="2.3" stroke-linecap="round" stroke-linejoin="round"/></svg></div>
<div class="hdr" style="left:628.5px;top:2px">Discount band</div>
<div class="fb" style="left:800px;top:20px"><svg style="left:5px;top:10px" width="18" height="10"><path d="M2 2 L9 8.5 L16 2" fill="none" stroke="#333" stroke-width="2.3" stroke-linecap="round" stroke-linejoin="round"/></svg></div>
<div class="hdr" style="left:844.5px;top:2px">Units sold</div>
<div class="fb" style="left:978px;top:20px"><svg style="left:5px;top:10px" width="18" height="10"><path d="M2 2 L9 8.5 L16 2" fill="none" stroke="#333" stroke-width="2.3" stroke-linecap="round" stroke-linejoin="round"/></svg></div>
<div class="hdr" style="left:1022.5px;top:2px">Manufacturing price</div>
<div class="fb" style="left:1268px;top:20px"><svg style="left:5px;top:10px" width="18" height="10"><path d="M2 2 L9 8.5 L16 2" fill="none" stroke="#333" stroke-width="2.3" stroke-linecap="round" stroke-linejoin="round"/></svg></div>
<div class="hdr" style="left:1312.5px;top:2px">Sale Price</div>
<div class="fb" style="left:1452px;top:20px"><svg style="left:5px;top:10px" width="18" height="10"><path d="M2 2 L9 8.5 L16 2" fill="none" stroke="#333" stroke-width="2.3" stroke-linecap="round" stroke-linejoin="round"/></svg></div>
<div class="hdr" style="left:1496.5px;top:2px">Gross Sales</div>
<div class="fb" style="left:1674px;top:20px"><svg style="left:5px;top:10px" width="18" height="10"><path d="M2 2 L9 8.5 L16 2" fill="none" stroke="#333" stroke-width="2.3" stroke-linecap="round" stroke-linejoin="round"/></svg></div>
<div class="hdr" style="left:1718.5px;top:2px">Discounts</div>
<div class="fb" style="left:1844px;top:20px"><svg style="left:5px;top:10px" width="18" height="10"><path d="M2 2 L9 8.5 L16 2" fill="none" stroke="#333" stroke-width="2.3" stroke-linecap="round" stroke-linejoin="round"/></svg></div>
<div class="hdr" style="left:1888.5px;top:2px">Sales</div>
<div class="fb" style="left:2036px;top:20px"><svg style="left:5px;top:10px" width="18" height="10"><path d="M2 2 L9 8.5 L16 2" fill="none" stroke="#333" stroke-width="2.3" stroke-linecap="round" stroke-linejoin="round"/></svg></div>
<div class="hdr" style="left:2080.5px;top:2px">COGS</div>
<div class="fb" style="left:2216px;top:20px"><svg style="left:5px;top:10px" width="18" height="10"><path d="M2 2 L9 8.5 L16 2" fill="none" stroke="#333" stroke-width="2.3" stroke-linecap="round" stroke-linejoin="round"/></svg></div>
<div class="hdr" style="left:2260.5px;top:2px">Profit</div>
<div class="fb" style="left:2396px;top:20px"><svg style="left:5px;top:10px" width="18" height="10"><path d="M2 2 L9 8.5 L16 2" fill="none" stroke="#333" stroke-width="2.3" stroke-linecap="round" stroke-linejoin="round"/></svg></div>
<div class="hdr" style="left:2440.5px;top:2px">Date</div>
<div class="fb" style="left:2556px;top:20px"><svg style="left:5px;top:10px" width="18" height="10"><path d="M2 2 L9 8.5 L16 2" fill="none" stroke="#333" stroke-width="2.3" stroke-linecap="round" stroke-linejoin="round"/></svg></div>
<div class="hdr" style="left:2600.5px;top:2px">Month Number</div>
<div class="fb" style="left:2780px;top:20px"><svg style="left:5px;top:10px" width="18" height="10"><path d="M2 2 L9 8.5 L16 2" fill="none" stroke="#333" stroke-width="2.3" stroke-linecap="round" stroke-linejoin="round"/></svg></div>
<div class="a" style="left:74px;top:56px;width:2740px;height:54px;background:#d9e1f2"></div>
<div class="a" style="left:74px;top:110px;width:2740px;height:2px;background:#8ea9db"></div>
<div class="a" style="left:0;top:110px;width:72px;height:2px;background:#e0e0e0"></div>
<div class="t rh" style="left:0;top:57px;width:75px">2</div>
<div class="cell" style="left:83px;top:57px">Enterprise</div>
<div class="cell" style="left:271px;top:57px">Canada</div>
<div class="cell" style="left:469px;top:57px">Basic</div>
<div class="cell" style="left:634px;top:57px">None</div>
<div class="cell r" style="right:1799px;top:57px">1618.5</div>
<div class="cell r" style="right:1509px;top:57px">$3.00</div>
<div class="cell r" style="right:1330px;top:57px">$20.00</div>
<div class="cell r" style="right:1108px;top:57px">$32,370.00</div>
<div class="cell" style="left:1729px;top:57px">$</div>
<div class="cell r" style="right:933px;top:57px">-</div>
<div class="cell r" style="right:746px;top:57px">$32,370.00</div>
<div class="cell r" style="right:566px;top:57px">$16,185.00</div>
<div class="cell r" style="right:386px;top:57px">$16,185.00</div>
<div class="cell r" style="right:221px;top:57px">1/1/2024</div>
<div class="cell r" style="right:-3px;top:57px">1</div>
<div class="a" style="left:74px;top:112px;width:2740px;height:54px;background:#ffffff"></div>
<div class="a" style="left:74px;top:166px;width:2740px;height:2px;background:#8ea9db"></div>
<div class="a" style="left:0;top:166px;width:72px;height:2px;background:#e0e0e0"></div>
<div class="t rh" style="left:0;top:113px;width:75px">3</div>
<div class="cell" style="left:83px;top:113px">Enterprise</div>
<div class="cell" style="left:271px;top:113px">Germany</div>
<div class="cell" style="left:469px;top:113px">Basic</div>
<div class="cell" style="left:634px;top:113px">None</div>
<div class="cell r" style="right:1799px;top:113px">1321</div>
<div class="cell r" style="right:1509px;top:113px">$3.00</div>
<div class="cell r" style="right:1330px;top:113px">$20.00</div>
<div class="cell r" style="right:1108px;top:113px">$26,420.00</div>
<div class="cell" style="left:1729px;top:113px">$</div>
<div class="cell r" style="right:933px;top:113px">-</div>
<div class="cell r" style="right:746px;top:113px">$26,420.00</div>
<div class="cell r" style="right:566px;top:113px">$13,210.00</div>
<div class="cell r" style="right:386px;top:113px">$13,210.00</div>
<div class="cell r" style="right:221px;top:113px">1/1/2024</div>
<div class="cell r" style="right:-3px;top:113px">1</div>
<div class="a" style="left:74px;top:168px;width:2740px;height:54px;background:#d9e1f2"></div>
<div class="a" style="left:74px;top:222px;width:2740px;height:2px;background:#8ea9db"></div>
<div class="a" style="left:0;top:222px;width:72px;height:2px;background:#e0e0e0"></div>
<div class="t rh" style="left:0;top:169px;width:75px">4</div>
<div class="cell" style="left:83px;top:169px">Government</div>
<div class="cell" style="left:271px;top:169px">France</div>
<div class="cell" style="left:469px;top:169px">Basic</div>
<div class="cell" style="left:634px;top:169px">None</div>
<div class="cell r" style="right:1799px;top:169px">2178</div>
<div class="cell r" style="right:1509px;top:169px">$3.00</div>
<div class="cell r" style="right:1330px;top:169px">$15.00</div>
<div class="cell r" style="right:1108px;top:169px">$32,670.00</div>
<div class="cell" style="left:1729px;top:169px">$</div>
<div class="cell r" style="right:933px;top:169px">-</div>
<div class="cell r" style="right:746px;top:169px">$32,670.00</div>
<div class="cell r" style="right:566px;top:169px">$21,780.00</div>
<div class="cell r" style="right:386px;top:169px">$10,890.00</div>
<div class="cell r" style="right:221px;top:169px">6/1/2024</div>
<div class="cell r" style="right:-3px;top:169px">6</div>
<div class="a" style="left:74px;top:224px;width:2740px;height:54px;background:#ffffff"></div>
<div class="a" style="left:74px;top:278px;width:2740px;height:2px;background:#8ea9db"></div>
<div class="a" style="left:0;top:278px;width:72px;height:2px;background:#e0e0e0"></div>
<div class="t rh" style="left:0;top:225px;width:75px">5</div>
<div class="cell" style="left:83px;top:225px">Government</div>
<div class="cell" style="left:271px;top:225px">Germany</div>
<div class="cell" style="left:469px;top:225px">Basic</div>
<div class="cell" style="left:634px;top:225px">None</div>
<div class="cell r" style="right:1799px;top:225px">888</div>
<div class="cell r" style="right:1509px;top:225px">$3.00</div>
<div class="cell r" style="right:1330px;top:225px">$15.00</div>
<div class="cell r" style="right:1108px;top:225px">$13,320.00</div>
<div class="cell" style="left:1729px;top:225px">$</div>
<div class="cell r" style="right:933px;top:225px">-</div>
<div class="cell r" style="right:746px;top:225px">$13,320.00</div>
<div class="cell r" style="right:566px;top:225px">$8,880.00</div>
<div class="cell r" style="right:386px;top:225px">$4,440.00</div>
<div class="cell r" style="right:221px;top:225px">6/1/2024</div>
<div class="cell r" style="right:-3px;top:225px">6</div>
<div class="a" style="left:74px;top:280px;width:2740px;height:54px;background:#d9e1f2"></div>
<div class="a" style="left:74px;top:334px;width:2740px;height:2px;background:#8ea9db"></div>
<div class="a" style="left:0;top:334px;width:72px;height:2px;background:#e0e0e0"></div>
<div class="t rh" style="left:0;top:281px;width:75px">6</div>
<div class="cell" style="left:83px;top:281px">Government</div>
<div class="cell" style="left:271px;top:281px">Mexico</div>
<div class="cell" style="left:469px;top:281px">Basic</div>
<div class="cell" style="left:634px;top:281px">None</div>
<div class="cell r" style="right:1799px;top:281px">2470</div>
<div class="cell r" style="right:1509px;top:281px">$3.00</div>
<div class="cell r" style="right:1330px;top:281px">$15.00</div>
<div class="cell r" style="right:1108px;top:281px">$37,050.00</div>
<div class="cell" style="left:1729px;top:281px">$</div>
<div class="cell r" style="right:933px;top:281px">-</div>
<div class="cell r" style="right:746px;top:281px">$37,050.00</div>
<div class="cell r" style="right:566px;top:281px">$24,700.00</div>
<div class="cell r" style="right:386px;top:281px">$12,350.00</div>
<div class="cell r" style="right:221px;top:281px">6/1/2024</div>
<div class="cell r" style="right:-3px;top:281px">6</div>
<div class="a" style="left:74px;top:336px;width:2740px;height:54px;background:#ffffff"></div>
<div class="a" style="left:74px;top:390px;width:2740px;height:2px;background:#8ea9db"></div>
<div class="a" style="left:0;top:390px;width:72px;height:2px;background:#e0e0e0"></div>
<div class="t rh" style="left:0;top:337px;width:75px">7</div>
<div class="cell" style="left:83px;top:337px">Enterprise</div>
<div class="cell" style="left:271px;top:337px">Germany</div>
<div class="cell" style="left:469px;top:337px">Basic</div>
<div class="cell" style="left:634px;top:337px">None</div>
<div class="cell r" style="right:1799px;top:337px">1513</div>
<div class="cell r" style="right:1509px;top:337px">$3.00</div>
<div class="cell r" style="right:1330px;top:337px">$350.00</div>
<div class="cell r" style="right:1108px;top:337px">$529,550.00</div>
<div class="cell" style="left:1729px;top:337px">$</div>
<div class="cell r" style="right:933px;top:337px">-</div>
<div class="cell r" style="right:746px;top:337px">$529,550.00</div>
<div class="cell r" style="right:566px;top:337px">$393,380.00</div>
<div class="cell r" style="right:386px;top:337px">$136,170.00</div>
<div class="cell r" style="right:221px;top:337px">12/1/2024</div>
<div class="cell r" style="right:-3px;top:337px">12</div>
<div class="a" style="left:74px;top:392px;width:2740px;height:54px;background:#d9e1f2"></div>
<div class="a" style="left:74px;top:446px;width:2740px;height:2px;background:#8ea9db"></div>
<div class="a" style="left:0;top:446px;width:72px;height:2px;background:#e0e0e0"></div>
<div class="t rh" style="left:0;top:393px;width:75px">8</div>
<div class="cell" style="left:83px;top:393px">Government</div>
<div class="cell" style="left:271px;top:393px">Germany</div>
<div class="cell" style="left:469px;top:393px">Standard</div>
<div class="cell" style="left:634px;top:393px">None</div>
<div class="cell r" style="right:1799px;top:393px">921</div>
<div class="cell r" style="right:1509px;top:393px">$5.00</div>
<div class="cell r" style="right:1330px;top:393px">$15.00</div>
<div class="cell r" style="right:1108px;top:393px">$13,815.00</div>
<div class="cell" style="left:1729px;top:393px">$</div>
<div class="cell r" style="right:933px;top:393px">-</div>
<div class="cell r" style="right:746px;top:393px">$13,815.00</div>
<div class="cell r" style="right:566px;top:393px">$9,210.00</div>
<div class="cell r" style="right:386px;top:393px">$4,605.00</div>
<div class="cell r" style="right:221px;top:393px">3/1/2024</div>
<div class="cell r" style="right:-3px;top:393px">3</div>
<div class="a" style="left:74px;top:448px;width:2740px;height:54px;background:#ffffff"></div>
<div class="a" style="left:74px;top:502px;width:2740px;height:2px;background:#8ea9db"></div>
<div class="a" style="left:0;top:502px;width:72px;height:2px;background:#e0e0e0"></div>
<div class="t rh" style="left:0;top:449px;width:75px">9</div>
<div class="cell" style="left:83px;top:449px">SMB</div>
<div class="cell" style="left:271px;top:449px">Canada</div>
<div class="cell" style="left:469px;top:449px">Standard</div>
<div class="cell" style="left:634px;top:449px">None</div>
<div class="cell r" style="right:1799px;top:449px">2518</div>
<div class="cell r" style="right:1509px;top:449px">$5.00</div>
<div class="cell r" style="right:1330px;top:449px">$12.00</div>
<div class="cell r" style="right:1108px;top:449px">$30,216.00</div>
<div class="cell" style="left:1729px;top:449px">$</div>
<div class="cell r" style="right:933px;top:449px">-</div>
<div class="cell r" style="right:746px;top:449px">$30,216.00</div>
<div class="cell r" style="right:566px;top:449px">$7,554.00</div>
<div class="cell r" style="right:386px;top:449px">$22,662.00</div>
<div class="cell r" style="right:221px;top:449px">6/1/2024</div>
<div class="cell r" style="right:-3px;top:449px">6</div>
<div class="a" style="left:74px;top:504px;width:2740px;height:54px;background:#d9e1f2"></div>
<div class="a" style="left:74px;top:558px;width:2740px;height:2px;background:#8ea9db"></div>
<div class="a" style="left:0;top:558px;width:72px;height:2px;background:#e0e0e0"></div>
<div class="t rh" style="left:0;top:505px;width:75px">10</div>
<div class="cell" style="left:83px;top:505px">Enterprise</div>
<div class="cell" style="left:271px;top:505px">France</div>
<div class="cell" style="left:469px;top:505px">Standard</div>
<div class="cell" style="left:634px;top:505px">None</div>
<div class="cell r" style="right:1799px;top:505px">1899</div>
<div class="cell r" style="right:1509px;top:505px">$5.00</div>
<div class="cell r" style="right:1330px;top:505px">$20.00</div>
<div class="cell r" style="right:1108px;top:505px">$37,980.00</div>
<div class="cell" style="left:1729px;top:505px">$</div>
<div class="cell r" style="right:933px;top:505px">-</div>
<div class="cell r" style="right:746px;top:505px">$37,980.00</div>
<div class="cell r" style="right:566px;top:505px">$18,990.00</div>
<div class="cell r" style="right:386px;top:505px">$18,990.00</div>
<div class="cell r" style="right:221px;top:505px">6/1/2024</div>
<div class="cell r" style="right:-3px;top:505px">6</div>
<div class="a" style="left:74px;top:560px;width:2740px;height:54px;background:#ffffff"></div>
<div class="a" style="left:74px;top:614px;width:2740px;height:2px;background:#8ea9db"></div>
<div class="a" style="left:0;top:614px;width:72px;height:2px;background:#e0e0e0"></div>
<div class="t rh" style="left:0;top:561px;width:75px">11</div>
<div class="cell" style="left:83px;top:561px">SMB</div>
<div class="cell" style="left:271px;top:561px">Germany</div>
<div class="cell" style="left:469px;top:561px">Standard</div>
<div class="cell" style="left:634px;top:561px">None</div>
<div class="cell r" style="right:1799px;top:561px">1545</div>
<div class="cell r" style="right:1509px;top:561px">$5.00</div>
<div class="cell r" style="right:1330px;top:561px">$12.00</div>
<div class="cell r" style="right:1108px;top:561px">$18,540.00</div>
<div class="cell" style="left:1729px;top:561px">$</div>
<div class="cell r" style="right:933px;top:561px">-</div>
<div class="cell r" style="right:746px;top:561px">$18,540.00</div>
<div class="cell r" style="right:566px;top:561px">$4,635.00</div>
<div class="cell r" style="right:386px;top:561px">$13,905.00</div>
<div class="cell r" style="right:221px;top:561px">6/1/2024</div>
<div class="cell r" style="right:-3px;top:561px">6</div>
<div class="a" style="left:74px;top:616px;width:2740px;height:54px;background:#d9e1f2"></div>
<div class="a" style="left:74px;top:670px;width:2740px;height:2px;background:#8ea9db"></div>
<div class="a" style="left:0;top:670px;width:72px;height:2px;background:#e0e0e0"></div>
<div class="t rh" style="left:0;top:617px;width:75px">12</div>
<div class="cell" style="left:83px;top:617px">Government</div>
<div class="cell" style="left:271px;top:617px">Mexico</div>
<div class="cell" style="left:469px;top:617px">Standard</div>
<div class="cell" style="left:634px;top:617px">None</div>
<div class="cell r" style="right:1799px;top:617px">2470</div>
<div class="cell r" style="right:1509px;top:617px">$5.00</div>
<div class="cell r" style="right:1330px;top:617px">$15.00</div>
<div class="cell r" style="right:1108px;top:617px">$37,050.00</div>
<div class="cell" style="left:1729px;top:617px">$</div>
<div class="cell r" style="right:933px;top:617px">-</div>
<div class="cell r" style="right:746px;top:617px">$37,050.00</div>
<div class="cell r" style="right:566px;top:617px">$24,700.00</div>
<div class="cell r" style="right:386px;top:617px">$12,350.00</div>
<div class="cell r" style="right:221px;top:617px">6/1/2024</div>
<div class="cell r" style="right:-3px;top:617px">6</div>
<div class="a" style="left:74px;top:672px;width:2740px;height:54px;background:#ffffff"></div>
<div class="a" style="left:74px;top:726px;width:2740px;height:2px;background:#8ea9db"></div>
<div class="a" style="left:0;top:726px;width:72px;height:2px;background:#e0e0e0"></div>
<div class="t rh" style="left:0;top:673px;width:75px">13</div>
<div class="cell" style="left:83px;top:673px">Education</div>
<div class="cell" style="left:271px;top:673px">Canada</div>
<div class="cell" style="left:469px;top:673px">Standard</div>
<div class="cell" style="left:634px;top:673px">None</div>
<div class="cell r" style="right:1799px;top:673px">2665.5</div>
<div class="cell r" style="right:1509px;top:673px">$5.00</div>
<div class="cell r" style="right:1330px;top:673px">$125.00</div>
<div class="cell r" style="right:1108px;top:673px">$333,187.50</div>
<div class="cell" style="left:1729px;top:673px">$</div>
<div class="cell r" style="right:933px;top:673px">-</div>
<div class="cell r" style="right:746px;top:673px">$333,187.50</div>
<div class="cell r" style="right:566px;top:673px">$319,860.00</div>
<div class="cell r" style="right:386px;top:673px">$13,327.50</div>
<div class="cell r" style="right:221px;top:673px">7/1/2024</div>
<div class="cell r" style="right:-3px;top:673px">7</div>
<div class="a" style="left:74px;top:728px;width:2740px;height:54px;background:#d9e1f2"></div>
<div class="a" style="left:74px;top:782px;width:2740px;height:2px;background:#8ea9db"></div>
<div class="a" style="left:0;top:782px;width:72px;height:2px;background:#e0e0e0"></div>
<div class="t rh" style="left:0;top:729px;width:75px">14</div>
<div class="cell" style="left:83px;top:729px">Consumer</div>
<div class="cell" style="left:271px;top:729px">Mexico</div>
<div class="cell" style="left:469px;top:729px">Standard</div>
<div class="cell" style="left:634px;top:729px">None</div>
<div class="cell r" style="right:1799px;top:729px">958</div>
<div class="cell r" style="right:1509px;top:729px">$5.00</div>
<div class="cell r" style="right:1330px;top:729px">$300.00</div>
<div class="cell r" style="right:1108px;top:729px">$287,400.00</div>
<div class="cell" style="left:1729px;top:729px">$</div>
<div class="cell r" style="right:933px;top:729px">-</div>
<div class="cell r" style="right:746px;top:729px">$287,400.00</div>
<div class="cell r" style="right:566px;top:729px">$239,500.00</div>
<div class="cell r" style="right:386px;top:729px">$47,900.00</div>
<div class="cell r" style="right:221px;top:729px">8/1/2024</div>
<div class="cell r" style="right:-3px;top:729px">8</div>
<div class="a" style="left:74px;top:784px;width:2740px;height:54px;background:#ffffff"></div>
<div class="a" style="left:74px;top:838px;width:2740px;height:2px;background:#8ea9db"></div>
<div class="a" style="left:0;top:838px;width:72px;height:2px;background:#e0e0e0"></div>
<div class="t rh" style="left:0;top:785px;width:75px">15</div>
<div class="cell" style="left:83px;top:785px">Enterprise</div>
<div class="cell" style="left:271px;top:785px">Germany</div>
<div class="cell" style="left:469px;top:785px">Standard</div>
<div class="cell" style="left:634px;top:785px">None</div>
<div class="cell r" style="right:1799px;top:785px">2146</div>
<div class="cell r" style="right:1509px;top:785px">$5.00</div>
<div class="cell r" style="right:1330px;top:785px">$7.00</div>
<div class="cell r" style="right:1108px;top:785px">$15,022.00</div>
<div class="cell" style="left:1729px;top:785px">$</div>
<div class="cell r" style="right:933px;top:785px">-</div>
<div class="cell r" style="right:746px;top:785px">$15,022.00</div>
<div class="cell r" style="right:566px;top:785px">$10,730.00</div>
<div class="cell r" style="right:386px;top:785px">$4,292.00</div>
<div class="cell r" style="right:221px;top:785px">9/1/2024</div>
<div class="cell r" style="right:-3px;top:785px">9</div>
<div class="a" style="left:74px;top:840px;width:2740px;height:54px;background:#d9e1f2"></div>
<div class="a" style="left:74px;top:894px;width:2740px;height:2px;background:#8ea9db"></div>
<div class="a" style="left:0;top:894px;width:72px;height:2px;background:#e0e0e0"></div>
<div class="t rh" style="left:0;top:841px;width:75px">16</div>
<div class="cell" style="left:83px;top:841px">Education</div>
<div class="cell" style="left:271px;top:841px">Canada</div>
<div class="cell" style="left:469px;top:841px">Standard</div>
<div class="cell" style="left:634px;top:841px">None</div>
<div class="cell r" style="right:1799px;top:841px">345</div>
<div class="cell r" style="right:1514px;top:841px">$5.00</div>
<div class="cell r" style="right:1330px;top:841px">$125.00</div>
<div class="cell r" style="right:1108px;top:841px">$43,125.00</div>
<div class="cell" style="left:1729px;top:841px">$</div>
<div class="cell r" style="right:933px;top:841px">-</div>
<div class="cell r" style="right:746px;top:841px">$43,125.00</div>
<div class="cell r" style="right:566px;top:841px">$41,400.00</div>
<div class="cell r" style="right:386px;top:841px">$1,725.00</div>
<div class="cell r" style="right:221px;top:841px">10/1/2023</div>
<div class="cell r" style="right:-3px;top:841px">10</div>
<div class="a" style="left:74px;top:896px;width:2740px;height:54px;background:#ffffff"></div>
<div class="a" style="left:74px;top:950px;width:2740px;height:2px;background:#8ea9db"></div>
<div class="a" style="left:0;top:950px;width:72px;height:2px;background:#e0e0e0"></div>
<div class="t rh" style="left:0;top:897px;width:75px">17</div>
<div class="cell" style="left:83px;top:897px">Government</div>
<div class="cell" style="left:271px;top:897px">United States</div>
<div class="cell" style="left:469px;top:897px">Standard</div>
<div class="cell" style="left:634px;top:897px">None</div>
<div class="cell r" style="right:1799px;top:897px">615</div>
<div class="cell r" style="right:1509px;top:897px">$5.00</div>
<div class="cell r" style="right:1330px;top:897px">$15.00</div>
<div class="cell r" style="right:1108px;top:897px">$9,225.00</div>
<div class="cell" style="left:1729px;top:897px">$</div>
<div class="cell r" style="right:933px;top:897px">-</div>
<div class="cell r" style="right:746px;top:897px">$9,225.00</div>
<div class="cell r" style="right:566px;top:897px">$6,150.00</div>
<div class="cell r" style="right:386px;top:897px">$3,075.00</div>
<div class="cell r" style="right:221px;top:897px">12/1/2024</div>
<div class="cell r" style="right:-3px;top:897px">12</div>
<div class="a" style="left:74px;top:952px;width:2740px;height:54px;background:#d9e1f2"></div>
<div class="a" style="left:74px;top:1006px;width:2740px;height:2px;background:#8ea9db"></div>
<div class="a" style="left:0;top:1006px;width:72px;height:2px;background:#e0e0e0"></div>
<div class="t rh" style="left:0;top:953px;width:75px">18</div>
<div class="cell" style="left:83px;top:953px">Enterprise</div>
<div class="cell" style="left:271px;top:953px">Canada</div>
<div class="cell" style="left:469px;top:953px">Premium</div>
<div class="cell" style="left:634px;top:953px">None</div>
<div class="cell r" style="right:1799px;top:953px">292</div>
<div class="cell r" style="right:1509px;top:953px">$10.00</div>
<div class="cell r" style="right:1330px;top:953px">$20.00</div>
<div class="cell r" style="right:1108px;top:953px">$5,840.00</div>
<div class="cell" style="left:1729px;top:953px">$</div>
<div class="cell r" style="right:933px;top:953px">-</div>
<div class="cell r" style="right:746px;top:953px">$5,840.00</div>
<div class="cell r" style="right:566px;top:953px">$2,920.00</div>
<div class="cell r" style="right:386px;top:953px">$2,920.00</div>
<div class="cell r" style="right:221px;top:953px">2/1/2024</div>
<div class="cell r" style="right:-3px;top:953px">2</div>
<div class="a" style="left:74px;top:1008px;width:2740px;height:54px;background:#ffffff"></div>
<div class="a" style="left:74px;top:1062px;width:2740px;height:2px;background:#8ea9db"></div>
<div class="a" style="left:0;top:1062px;width:72px;height:2px;background:#e0e0e0"></div>
<div class="t rh" style="left:0;top:1009px;width:75px">19</div>
<div class="cell" style="left:83px;top:1009px">Government</div>
<div class="cell" style="left:271px;top:1009px">Mexico</div>
<div class="cell" style="left:469px;top:1009px">Premium</div>
<div class="cell" style="left:634px;top:1009px">None</div>
<div class="cell r" style="right:1799px;top:1009px">974</div>
<div class="cell r" style="right:1509px;top:1009px">$10.00</div>
<div class="cell r" style="right:1330px;top:1009px">$15.00</div>
<div class="cell r" style="right:1108px;top:1009px">$14,610.00</div>
<div class="cell" style="left:1729px;top:1009px">$</div>
<div class="cell r" style="right:933px;top:1009px">-</div>
<div class="cell r" style="right:746px;top:1009px">$14,610.00</div>
<div class="cell r" style="right:566px;top:1009px">$9,740.00</div>
<div class="cell r" style="right:386px;top:1009px">$4,870.00</div>
<div class="cell r" style="right:221px;top:1009px">2/1/2024</div>
<div class="cell r" style="right:-3px;top:1009px">2</div>
<div class="a" style="left:74px;top:1064px;width:2740px;height:54px;background:#d9e1f2"></div>
<div class="a" style="left:74px;top:1118px;width:2740px;height:2px;background:#8ea9db"></div>
<div class="a" style="left:0;top:1118px;width:72px;height:2px;background:#e0e0e0"></div>
<div class="t rh" style="left:0;top:1065px;width:75px">20</div>
<div class="cell" style="left:83px;top:1065px">SMB</div>
<div class="cell" style="left:271px;top:1065px">Canada</div>
<div class="cell" style="left:469px;top:1065px">Premium</div>
<div class="cell" style="left:634px;top:1065px">None</div>
<div class="cell r" style="right:1799px;top:1065px">2518</div>
<div class="cell r" style="right:1509px;top:1065px">$10.00</div>
<div class="cell r" style="right:1330px;top:1065px">$12.00</div>
<div class="cell r" style="right:1108px;top:1065px">$30,216.00</div>
<div class="cell" style="left:1729px;top:1065px">$</div>
<div class="cell r" style="right:933px;top:1065px">-</div>
<div class="cell r" style="right:746px;top:1065px">$30,216.00</div>
<div class="cell r" style="right:566px;top:1065px">$7,554.00</div>
<div class="cell r" style="right:386px;top:1065px">$22,662.00</div>
<div class="cell r" style="right:221px;top:1065px">6/1/2024</div>
<div class="cell r" style="right:-3px;top:1065px">6</div>
<div class="a" style="left:74px;top:1120px;width:2740px;height:54px;background:#ffffff"></div>
<div class="a" style="left:74px;top:1174px;width:2740px;height:2px;background:#8ea9db"></div>
<div class="a" style="left:0;top:1174px;width:72px;height:2px;background:#e0e0e0"></div>
<div class="t rh" style="left:0;top:1121px;width:75px">21</div>
<div class="cell" style="left:83px;top:1121px">Enterprise</div>
<div class="cell" style="left:271px;top:1121px">Germany</div>
<div class="cell" style="left:469px;top:1121px">Premium</div>
<div class="cell" style="left:634px;top:1121px">None</div>
<div class="cell r" style="right:1799px;top:1121px">1006</div>
<div class="cell r" style="right:1509px;top:1121px">$10.00</div>
<div class="cell r" style="right:1330px;top:1121px">$350.00</div>
<div class="cell r" style="right:1108px;top:1121px">$352,100.00</div>
<div class="cell" style="left:1729px;top:1121px">$</div>
<div class="cell r" style="right:933px;top:1121px">-</div>
<div class="cell r" style="right:746px;top:1121px">$352,100.00</div>
<div class="cell r" style="right:566px;top:1121px">$261,560.00</div>
<div class="cell r" style="right:386px;top:1121px">$90,540.00</div>
<div class="cell r" style="right:221px;top:1121px">6/1/2024</div>
<div class="cell r" style="right:-3px;top:1121px">6</div>
<div class="a" style="left:74px;top:1176px;width:2740px;height:54px;background:#d9e1f2"></div>
<div class="a" style="left:74px;top:1230px;width:2740px;height:2px;background:#8ea9db"></div>
<div class="a" style="left:0;top:1230px;width:72px;height:2px;background:#e0e0e0"></div>
<div class="t rh" style="left:0;top:1177px;width:75px">22</div>
<div class="cell" style="left:83px;top:1177px">SMB</div>
<div class="cell" style="left:271px;top:1177px">Germany</div>
<div class="cell" style="left:469px;top:1177px">Premium</div>
<div class="cell" style="left:634px;top:1177px">None</div>
<div class="cell r" style="right:1799px;top:1177px">367</div>
<div class="cell r" style="right:1509px;top:1177px">$10.00</div>
<div class="cell r" style="right:1330px;top:1177px">$12.00</div>
<div class="cell r" style="right:1108px;top:1177px">$4,404.00</div>
<div class="cell" style="left:1729px;top:1177px">$</div>
<div class="cell r" style="right:933px;top:1177px">-</div>
<div class="cell r" style="right:746px;top:1177px">$4,404.00</div>
<div class="cell r" style="right:566px;top:1177px">$1,101.00</div>
<div class="cell r" style="right:386px;top:1177px">$3,303.00</div>
<div class="cell r" style="right:221px;top:1177px">7/1/2024</div>
<div class="cell r" style="right:-3px;top:1177px">7</div>
<div class="a" style="left:74px;top:1232px;width:2740px;height:54px;background:#ffffff"></div>
<div class="a" style="left:74px;top:1286px;width:2740px;height:2px;background:#8ea9db"></div>
<div class="a" style="left:0;top:1286px;width:72px;height:2px;background:#e0e0e0"></div>
<div class="t rh" style="left:0;top:1233px;width:75px">23</div>
<div class="cell" style="left:83px;top:1233px">Enterprise</div>
<div class="cell" style="left:271px;top:1233px">Mexico</div>
<div class="cell" style="left:469px;top:1233px">Premium</div>
<div class="cell" style="left:634px;top:1233px">None</div>
<div class="cell r" style="right:1799px;top:1233px">883</div>
<div class="cell r" style="right:1509px;top:1233px">$10.00</div>
<div class="cell r" style="right:1330px;top:1233px">$7.00</div>
<div class="cell r" style="right:1108px;top:1233px">$6,181.00</div>
<div class="cell" style="left:1729px;top:1233px">$</div>
<div class="cell r" style="right:933px;top:1233px">-</div>
<div class="cell r" style="right:746px;top:1233px">$6,181.00</div>
<div class="cell r" style="right:566px;top:1233px">$4,415.00</div>
<div class="cell r" style="right:386px;top:1233px">$1,766.00</div>
<div class="cell r" style="right:221px;top:1233px">8/1/2024</div>
<div class="cell r" style="right:-3px;top:1233px">8</div>
<div class="a" style="left:74px;top:1288px;width:2740px;height:54px;background:#d9e1f2"></div>
<div class="a" style="left:74px;top:1342px;width:2740px;height:2px;background:#8ea9db"></div>
<div class="a" style="left:0;top:1342px;width:72px;height:2px;background:#e0e0e0"></div>
<div class="t rh" style="left:0;top:1289px;width:75px">24</div>
<div class="cell" style="left:83px;top:1289px">Government</div>
<div class="cell" style="left:271px;top:1289px">France</div>
<div class="cell" style="left:469px;top:1289px">Premium</div>
<div class="cell" style="left:634px;top:1289px">None</div>
<div class="cell r" style="right:1799px;top:1289px">549</div>
<div class="cell r" style="right:1509px;top:1289px">$10.00</div>
<div class="cell r" style="right:1330px;top:1289px">$15.00</div>
<div class="cell r" style="right:1108px;top:1289px">$8,235.00</div>
<div class="cell" style="left:1729px;top:1289px">$</div>
<div class="cell r" style="right:933px;top:1289px">-</div>
<div class="cell r" style="right:746px;top:1289px">$8,235.00</div>
<div class="cell r" style="right:566px;top:1289px">$5,490.00</div>
<div class="cell r" style="right:386px;top:1289px">$2,745.00</div>
<div class="cell r" style="right:221px;top:1289px">9/1/2023</div>
<div class="cell r" style="right:-3px;top:1289px">9</div>
<div class="a" style="left:74px;top:1344px;width:2740px;height:54px;background:#ffffff"></div>
<div class="a" style="left:74px;top:1398px;width:2740px;height:2px;background:#8ea9db"></div>
<div class="a" style="left:0;top:1398px;width:72px;height:2px;background:#e0e0e0"></div>
<div class="t rh" style="left:0;top:1345px;width:75px">25</div>
<div class="cell" style="left:83px;top:1345px">Consumer</div>
<div class="cell" style="left:271px;top:1345px">Mexico</div>
<div class="cell" style="left:469px;top:1345px">Premium</div>
<div class="cell" style="left:634px;top:1345px">None</div>
<div class="cell r" style="right:1799px;top:1345px">788</div>
<div class="cell r" style="right:1509px;top:1345px">$10.00</div>
<div class="cell r" style="right:1330px;top:1345px">$300.00</div>
<div class="cell r" style="right:1108px;top:1345px">$236,400.00</div>
<div class="cell" style="left:1729px;top:1345px">$</div>
<div class="cell r" style="right:933px;top:1345px">-</div>
<div class="cell r" style="right:746px;top:1345px">$236,400.00</div>
<div class="cell r" style="right:566px;top:1345px">$197,000.00</div>
<div class="cell r" style="right:386px;top:1345px">$39,400.00</div>
<div class="cell r" style="right:221px;top:1345px">9/1/2023</div>
<div class="cell r" style="right:-3px;top:1345px">9</div>
<div class="a" style="left:74px;top:1400px;width:2740px;height:54px;background:#d9e1f2"></div>
<div class="a" style="left:74px;top:1454px;width:2740px;height:2px;background:#8ea9db"></div>
<div class="a" style="left:0;top:1454px;width:72px;height:2px;background:#e0e0e0"></div>
<div class="t rh" style="left:0;top:1401px;width:75px">26</div>
<div class="cell" style="left:83px;top:1401px">Government</div>
<div class="cell" style="left:271px;top:1401px">Mexico</div>
<div class="cell" style="left:469px;top:1401px">Premium</div>
<div class="cell" style="left:634px;top:1401px">None</div>
<div class="cell r" style="right:1799px;top:1401px">2472</div>
<div class="cell r" style="right:1509px;top:1401px">$10.00</div>
<div class="cell r" style="right:1330px;top:1401px">$15.00</div>
<div class="cell r" style="right:1108px;top:1401px">$37,080.00</div>
<div class="cell" style="left:1729px;top:1401px">$</div>
<div class="cell r" style="right:933px;top:1401px">-</div>
<div class="cell r" style="right:746px;top:1401px">$37,080.00</div>
<div class="cell r" style="right:566px;top:1401px">$24,720.00</div>
<div class="cell r" style="right:386px;top:1401px">$12,360.00</div>
<div class="cell r" style="right:221px;top:1401px">9/1/2024</div>
<div class="cell r" style="right:-3px;top:1401px">9</div>
<div class="a" style="left:74px;top:1456px;width:2740px;height:54px;background:#ffffff"></div>
<div class="a" style="left:74px;top:1510px;width:2740px;height:2px;background:#8ea9db"></div>
<div class="a" style="left:0;top:1510px;width:72px;height:2px;background:#e0e0e0"></div>
<div class="t rh" style="left:0;top:1457px;width:75px">27</div>
<div class="cell" style="left:83px;top:1457px">Enterprise</div>
<div class="cell" style="left:271px;top:1457px">United States</div>
<div class="cell" style="left:469px;top:1457px">Premium</div>
<div class="cell" style="left:634px;top:1457px">None</div>
<div class="cell r" style="right:1799px;top:1457px">1143</div>
<div class="cell r" style="right:1509px;top:1457px">$10.00</div>
<div class="cell r" style="right:1330px;top:1457px">$7.00</div>
<div class="cell r" style="right:1108px;top:1457px">$8,001.00</div>
<div class="cell" style="left:1729px;top:1457px">$</div>
<div class="cell r" style="right:933px;top:1457px">-</div>
<div class="cell r" style="right:746px;top:1457px">$8,001.00</div>
<div class="cell r" style="right:566px;top:1457px">$5,715.00</div>
<div class="cell r" style="right:386px;top:1457px">$2,286.00</div>
<div class="cell r" style="right:221px;top:1457px">10/1/2024</div>
<div class="cell r" style="right:-3px;top:1457px">10</div>
<div class="a" style="left:74px;top:1512px;width:2740px;height:54px;background:#d9e1f2"></div>
<div class="a" style="left:74px;top:1566px;width:2740px;height:2px;background:#8ea9db"></div>
<div class="a" style="left:0;top:1566px;width:72px;height:2px;background:#e0e0e0"></div>
<div class="t rh" style="left:0;top:1513px;width:75px">28</div>
<div class="cell" style="left:83px;top:1513px">Enterprise</div>
<div class="cell" style="left:271px;top:1513px">Canada</div>
<div class="cell" style="left:469px;top:1513px">Premium</div>
<div class="cell" style="left:634px;top:1513px">None</div>
<div class="cell r" style="right:1799px;top:1513px">1725</div>
<div class="cell r" style="right:1509px;top:1513px">$10.00</div>
<div class="cell r" style="right:1330px;top:1513px">$350.00</div>
<div class="cell r" style="right:1108px;top:1513px">$603,750.00</div>
<div class="cell" style="left:1729px;top:1513px">$</div>
<div class="cell r" style="right:933px;top:1513px">-</div>
<div class="cell r" style="right:746px;top:1513px">$603,750.00</div>
<div class="cell r" style="right:566px;top:1513px">$448,500.00</div>
<div class="cell r" style="right:381px;top:1513px">$155,250.00</div>
<div class="cell r" style="right:221px;top:1513px">11/1/2023</div>
<div class="cell r" style="right:-3px;top:1513px">11</div>
<div class="a" style="left:74px;top:1568px;width:2740px;height:54px;background:#ffffff"></div>
<div class="a" style="left:74px;top:1622px;width:2740px;height:2px;background:#8ea9db"></div>
<div class="a" style="left:0;top:1622px;width:72px;height:2px;background:#e0e0e0"></div>
<div class="t rh" style="left:0;top:1569px;width:75px">29</div>
<div class="cell" style="left:83px;top:1569px">SMB</div>
<div class="cell" style="left:271px;top:1569px">United States</div>
<div class="cell" style="left:469px;top:1569px">Premium</div>
<div class="cell" style="left:634px;top:1569px">None</div>
<div class="cell r" style="right:1799px;top:1569px">912</div>
<div class="cell r" style="right:1509px;top:1569px">$10.00</div>
<div class="cell r" style="right:1325px;top:1569px">$12.00</div>
<div class="cell r" style="right:1103px;top:1569px">$10,944.00</div>
<div class="cell" style="left:1729px;top:1569px">$</div>
<div class="cell r" style="right:933px;top:1569px">-</div>
<div class="cell r" style="right:741px;top:1569px">$10,944.00</div>
<div class="cell r" style="right:561px;top:1569px">$2,736.00</div>
<div class="cell r" style="right:381px;top:1569px">$8,208.00</div>
<div class="cell r" style="right:221px;top:1569px">11/1/2023</div>
<div class="cell r" style="right:-3px;top:1569px">11</div>
<div class="a" style="left:74px;top:1624px;width:2740px;height:54px;background:#d9e1f2"></div>
<div class="a" style="left:74px;top:1678px;width:2740px;height:2px;background:#8ea9db"></div>
<div class="a" style="left:0;top:1678px;width:72px;height:2px;background:#e0e0e0"></div>
<div class="gl" style="left:260px;top:56px;height:1584px"></div>
<div class="gl" style="left:458px;top:56px;height:1584px"></div>
<div class="gl" style="left:618px;top:56px;height:1584px"></div>
<div class="gl" style="left:834px;top:56px;height:1584px"></div>
<div class="gl" style="left:1012px;top:56px;height:1584px"></div>
<div class="gl" style="left:1302px;top:56px;height:1584px"></div>
<div class="gl" style="left:1486px;top:56px;height:1584px"></div>
<div class="gl" style="left:1708px;top:56px;height:1584px"></div>
<div class="gl" style="left:1878px;top:56px;height:1584px"></div>
<div class="gl" style="left:2070px;top:56px;height:1584px"></div>
<div class="gl" style="left:2250px;top:56px;height:1584px"></div>
<div class="gl" style="left:2430px;top:56px;height:1584px"></div>
<div class="gl" style="left:2590px;top:56px;height:1584px"></div>
</div>
<div class="a" style="left:72px;top:432px;width:2px;height:1584px;background:#c6c6c6"></div>
<div class="a" style="left:0;top:2016px;width:2804px;height:2px;background:#d6d6d6"></div>
<svg style="left:24px;top:2038px" width="16" height="22"><path d="M13 2 L3 11 L13 20" fill="none" stroke="#424242" stroke-width="2.2" stroke-linecap="round" stroke-linejoin="round"/></svg>
<svg style="left:80px;top:2038px" width="16" height="22"><path d="M3 2 L13 11 L3 20" fill="none" stroke="#424242" stroke-width="2.2" stroke-linecap="round" stroke-linejoin="round"/></svg>
<svg style="left:132px;top:2037px" width="24" height="20"><path d="M0 2 H24 M0 10.5 H24 M0 19 H24" stroke="#424242" stroke-width="2"/></svg>
<svg style="left:180px;top:2015px" width="186" height="60" viewBox="0 0 186 60"><defs><filter id="tsh" x="-10%" y="-10%" width="120%" height="130%"><feDropShadow dx="0" dy="1" stdDeviation="1" flood-opacity="0.16"/></filter></defs>
<path d="M0 0 Q12 0 12 9 V50 Q12 57 19 57 H167 Q174 57 174 50 V9 Q174 0 186 0z" fill="#fff" filter="url(#tsh)"/></svg>
<div class="a" style="left:208px;top:2068px;width:130px;height:4px;border-radius:2px;background:#107c41"></div>
<div class="t" style="left:208px;top:2024px;font-size:25.6px;line-height:36px;font-weight:bold;color:#242424">Sales data</div>
<div class="t" style="left:372px;top:2024px;font-size:26.9px;line-height:36px;color:#424242">Dashboard</div>
<svg style="left:535px;top:2034px" width="20" height="20"><path d="M10 0 V20 M0 10 H20" stroke="#424242" stroke-width="2"/></svg>
<div class="a" style="left:0;top:2080px;width:3808px;height:2px;background:#d6d6d6"></div>
<div class="t" style="left:16px;top:2086px;font-size:24.1px;line-height:36px;color:#616161">Calculation Mode: Automatic</div>
<div class="t" style="left:357px;top:2086px;font-size:23.6px;line-height:36px;color:#616161">Workbook Statistics</div>
<svg class="chev" style="left:3244.0px;top:2098.5px" width="22" height="13"><path d="M2 2 L11.0 11 L20 2" fill="none" stroke="#424242" stroke-width="2" stroke-linecap="round" stroke-linejoin="round"/></svg>
<div class="t" style="left:3298px;top:2086px;font-size:23.7px;line-height:36px;color:#616161">Give Feedback to Microsoft</div>
<div class="a" style="left:3620px;top:2102px;width:22px;height:2px;background:#424242"></div>
<div class="t" style="left:3677px;top:2086px;font-size:22.5px;line-height:36px;color:#616161">100%</div>
<svg style="left:3768px;top:2092px" width="22" height="22"><path d="M11 0 V22 M0 11 H22" stroke="#424242" stroke-width="2"/></svg>
<div class="a" style="left:2804px;top:336px;width:1004px;height:1744px;background:#fafafa;border-left:2px solid #d2d2d2"></div>
<div class="t" style="left:2836.5px;top:383.4px;font-size:30.5px;line-height:36px;color:#242424;font-weight:bold;transform:scaleX(0.9);transform-origin:left">Excel Labs</div>
<svg style="left:3666px;top:396px" width="28" height="8"><circle cx="3.5" cy="4" r="3" fill="#424242"/><circle cx="14" cy="4" r="3" fill="#424242"/><circle cx="24.5" cy="4" r="3" fill="#424242"/></svg>
<svg style="left:3730px;top:387px" width="28" height="26"><path d="M2 1 L26 25 M26 1 L2 25" stroke="#424242" stroke-width="2.2"/></svg>
<svg style="left:2864px;top:512px" width="24" height="22"><path d="M0 2 H24 M0 11 H24 M0 20 H24" stroke="#424242" stroke-width="1.8"/></svg>
<div class="a" style="left:3704px;top:492px;width:64px;height:64px;border-radius:12px;background:#107c41"></div>
<svg style="left:3721px;top:507px" width="32" height="32" viewBox="0 0 32 32"><path d="M14 4 H5 a3 3 0 0 0-3 3 V27 a3 3 0 0 0 3 3 H25 a3 3 0 0 0 3-3 V18" fill="none" stroke="#fff" stroke-width="2.2"/><path d="M13 19 L29 3" stroke="#fff" stroke-width="2.4" stroke-linecap="round"/></svg>
<div class="t" style="left:3205px;top:593.5px;width:200px;text-align:center;font-size:23px;line-height:36px;color:#707070">Today</div>
<div class="a" style="left:2932px;top:680px;width:812px;height:152px;border-radius:16px;background:#f3f3f3"></div>
<div class="t" style="left:2964px;top:700.4px;font-size:27.8px;line-height:36px;color:#424242;">Run a full analysis on this dataset. I want to understand</div>
<div class="t" style="left:2964px;top:740.7px;font-size:27.8px;line-height:36px;color:#424242;">some important insights to help me make decisions about</div>
<div class="t" style="left:2964px;top:781.0px;font-size:27.8px;line-height:36px;color:#424242;">my business. Make it visual!</div>
<svg style="left:2875px;top:871px" width="34" height="34" viewBox="0 0 34 34"><defs><linearGradient id="agg" x1="0" y1="0" x2="1" y2="1"><stop offset="0" stop-color="#3fb66c"/><stop offset="1" stop-color="#1b8579"/></linearGradient></defs>
<rect width="34" height="34" rx="6.5" fill="url(#agg)"/><path d="M11 0 V34 M23 0 V34 M0 11 H34 M0 23 H34" stroke="#a9f3a3" stroke-width="2"/></svg>
<div class="t" style="left:2933px;top:872.2px;font-size:29.5px;line-height:36px;color:#323130;font-weight:bold;transform:scaleX(0.922);transform-origin:left">Agent mode</div>
<div class="t" style="left:2868px;top:939.4px;font-size:27.8px;line-height:36px;color:#383838;">OK, I’ll start working on your request.</div>
<div class="t" style="left:2868px;top:994.5px;font-size:27.5px;line-height:36px;color:#616161;">Editing file</div>
<svg style="left:3013px;top:1005px" width="22" height="14"><path d="M2 12 L11 3 L20 12" fill="none" stroke="#616161" stroke-width="2"/></svg>
<div class="a" style="left:2869px;top:1061px;width:874px;height:462px;border-radius:28px;border:2px solid #e1e1e1"></div>
<svg style="left:2908px;top:1107.3px" width="34" height="26"><path d="M2 14 L11 23 L31 2" fill="none" stroke="#616161" stroke-width="2.2"/></svg>
<div class="t" style="left:2964px;top:1100.9px;font-size:27.2px;line-height:36px;color:#323130;">Planning analysis and visuals</div>
<svg style="left:3683px;top:1108.3px" width="14" height="20"><path d="M2 2 L10 10 L2 18" fill="none" stroke="#424242" stroke-width="2"/></svg>
<svg style="left:2908px;top:1179.4px" width="34" height="26"><path d="M2 14 L11 23 L31 2" fill="none" stroke="#616161" stroke-width="2.2"/></svg>
<div class="t" style="left:2964px;top:1173.0px;font-size:27.2px;line-height:36px;color:#323130;">Designing step-by-step analysis</div>
<svg style="left:3683px;top:1180.4px" width="14" height="20"><path d="M2 2 L10 10 L2 18" fill="none" stroke="#424242" stroke-width="2"/></svg>
<svg style="left:2896px;top:1258px" width="56" height="12"><rect x="1" y="1" width="12" height="10" rx="5" fill="#3d8eb9"/><rect x="19" y="1" width="11" height="10" rx="5" fill="#5a9e8a"/><rect x="36" y="1" width="17" height="10" rx="5" fill="#9bbb4a"/></svg>
<div class="t" style="left:2964px;top:1245.1px;font-size:27.2px;line-height:36px;color:#323130;">Building pivots and charts</div>
<svg style="left:3675px;top:1259px" width="22" height="14"><path d="M2 2 L11 11 L20 2" fill="none" stroke="#424242" stroke-width="2"/></svg>
<div class="t" style="left:2964px;top:1294.8px;font-size:27.7px;line-height:36px;color:#616161;">I'm outlining steps for pivot tables in the</div>
<div class="t" style="left:2964px;top:1334.8px;font-size:27.7px;line-height:36px;color:#616161;">'Dashboard': monthly trends, product sales, segment</div>
<div class="t" style="left:2964px;top:1374.8px;font-size:27.7px;line-height:36px;color:#616161;">sales, country rankings, discount bands. I'm also planning</div>
<div class="t" style="left:2964px;top:1414.8px;font-size:27.7px;line-height:36px;color:#616161;">charts and applying conditional formatting. Verification</div>
<div class="t" style="left:2964px;top:1454.8px;font-size:27.7px;line-height:36px;color:#616161;">follows each step.</div>
<div class="a" style="left:2837px;top:1789px;width:938px;height:154px;border-radius:32px;background:linear-gradient(#dedede 0%,#d0d0d0 50%,#8a8a8a 100%);box-shadow:0 8px 18px rgba(0,0,0,0.09)"></div>
<div class="a" style="left:2839px;top:1791px;width:934px;height:150px;border-radius:30px;background:#fff"></div>
<div class="a" style="left:2868px;top:1804px;width:2px;height:39px;background:#242424"></div>
<div class="t" style="left:2871px;top:1808.3px;font-size:28px;line-height:36px;color:#707070;">Describe what you’d like to create or edit</div>
<svg style="left:2873px;top:1880px" width="30" height="30"><path d="M15 0 V30 M0 15 H30" stroke="#424242" stroke-width="2"/></svg>
<div class="a" style="left:3692px;top:1864px;width:64px;height:64px;border-radius:50%;background:#c8e9d6"></div>
<div class="a" style="left:3712px;top:1884px;width:24px;height:24px;border-radius:4px;background:#107c41"></div>
<div class="t" style="left:3101px;top:1956.6px;width:400px;text-align:center;font-size:24.1px;line-height:36px;color:#616161">AI-generated content may be incorrect</div>
</div>
<svg style="left:3756px;top:0px" width="84" height="22" viewBox="0 0 84 22">
<ellipse cx="17.4" cy="9.2" rx="14.5" ry="9.6" fill="#ec1c1c"/>
<text x="6.5" y="13.5" font-family="Liberation Sans" font-size="13" font-style="italic" fill="#fff" textLength="21">php</text>
<rect x="35.5" y="4.3" width="13" height="9.5" rx="2.5" fill="none" stroke="#111" stroke-width="1.6"/>
<path d="M42 2.5 V16.5" stroke="#111" stroke-width="1.7"/>
<path d="M58 2 V4.5 M51 5.5 H65 M54 6.5 C56 11 60 14 65 15.5 M62 6.5 C60 11 56 14 50.5 15.5" fill="none" stroke="#111" stroke-width="1.6"/>
<path d="M67.5 5 V16" stroke="#111" stroke-width="1.5"/>
</svg>
</body></html>
